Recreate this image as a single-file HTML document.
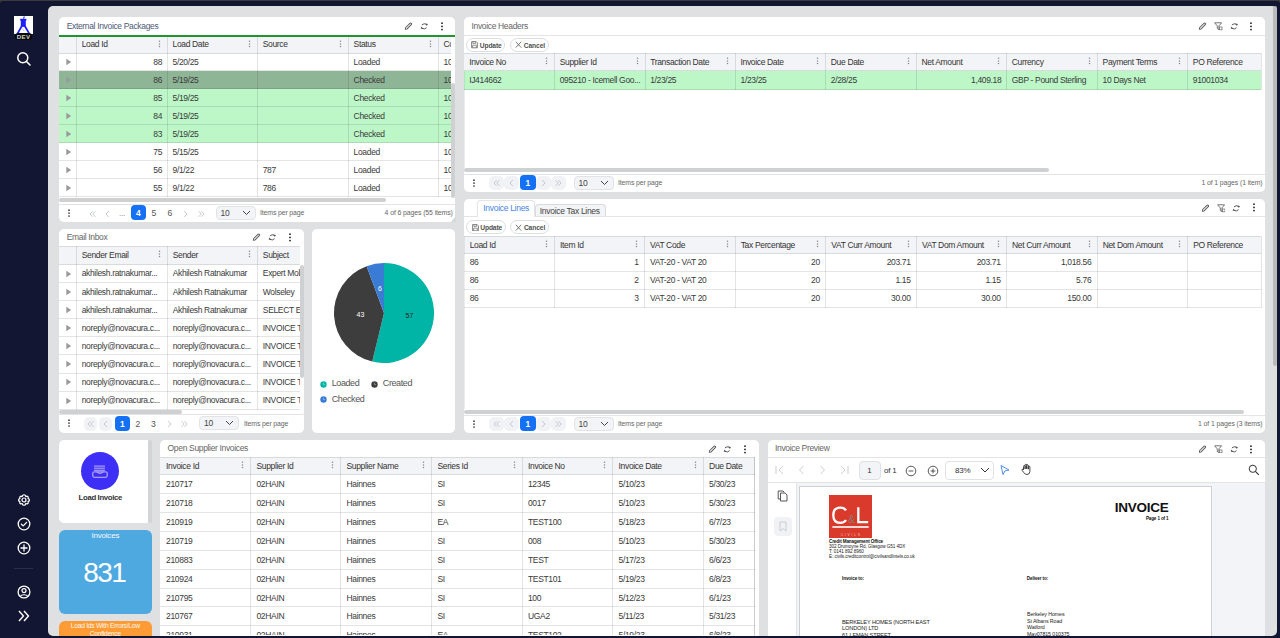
<!DOCTYPE html><html><head><meta charset="utf-8"><style>html,body{margin:0;padding:0;} body{width:1280px;height:638px;overflow:hidden;position:relative;background:#131633;font-family:"Liberation Sans", sans-serif;} div,svg{box-sizing:border-box;}</style></head><body><div style="position:absolute;left:0px;top:0px;width:1280px;height:1px;background:#3b3b3b;"></div><div style="position:absolute;left:0px;top:0px;width:3px;height:3px;background:#3b3b3b;"></div><div style="position:absolute;left:1277px;top:0px;width:3px;height:3px;background:#3b3b3b;"></div><div style="position:absolute;left:0px;top:1px;width:1280px;height:637px;background:#131633;border-radius:3px 3px 0 0;"></div><div style="position:absolute;left:47.5px;top:6px;width:1229.3px;height:630px;background:#dfe0e2;border-radius:5px;"></div><div style="position:absolute;left:14px;top:16px;width:19px;height:18px;background:#fff;"></div><svg style="position:absolute;left:14px;top:16px;" width="19" height="18" viewBox="0 0 19 18"><g fill="#1f1fff"><rect x="6.8" y="3.2" width="5" height="7.6"/><rect x="6.2" y="2.8" width="6.2" height="1.8"/><path d="M9.6 0.4 L10.9 0.6 L10.1 2.8 L9.1 2.8 Z"/><path d="M7.2 9.2 L9 9.8 L4.6 17.6 L2.6 17.6 Z"/><path d="M11.4 9.2 L9.6 9.8 L14.2 17.6 L16.2 17.6 Z"/></g><path d="M8.2 12.5 L10.2 15" stroke="#8f8fff" stroke-width="0.6"/></svg><div style="position:absolute;left:14.6px;top:33.2px;width:17.8px;height:7.2px;background:#080808;border-radius:3.2px;"></div><div style="position:absolute;left:-76.4px;width:200px;top:33.2px;font-size:6.2px;line-height:7.44px;color:#d2d2d2;font-weight:700;letter-spacing:0.25px;white-space:nowrap;text-align:center;">DEV</div><svg style="position:absolute;left:16px;top:51px;" width="16" height="16" viewBox="0 0 16 16"><circle cx="6.8" cy="6.8" r="5" fill="none" stroke="#fff" stroke-width="1.5"/><path d="M10.5 10.5 L14 14" stroke="#fff" stroke-width="1.6" stroke-linecap="round"/></svg><svg style="position:absolute;left:16px;top:492px;" width="16" height="16" viewBox="0 0 16 16"><path d="M8 1.8 L9.3 2.2 L9.8 3.6 L11.2 3.1 L12.3 4.1 L12 5.5 L13.3 6.3 L13.3 7.9 L12 8.6 L12.3 10 L11.2 11 L9.8 10.5 L9.3 11.9 L8 12.3 L6.7 11.9 L6.2 10.5 L4.8 11 L3.7 10 L4 8.6 L2.7 7.9 L2.7 6.3 L4 5.5 L3.7 4.1 L4.8 3.1 L6.2 3.6 L6.7 2.2 Z" transform="translate(0,1)" fill="none" stroke="#fff" stroke-width="1.2" stroke-linejoin="round"/><circle cx="8" cy="8" r="2" fill="none" stroke="#fff" stroke-width="1.2"/></svg><svg style="position:absolute;left:16px;top:516px;" width="16" height="16" viewBox="0 0 16 16"><circle cx="8" cy="8" r="5.8" fill="none" stroke="#fff" stroke-width="1.3"/><path d="M5.4 8.2 L7.2 9.9 L10.6 6.4" fill="none" stroke="#fff" stroke-width="1.3" stroke-linecap="round" stroke-linejoin="round"/></svg><svg style="position:absolute;left:16px;top:539.5px;" width="16" height="16" viewBox="0 0 16 16"><circle cx="8" cy="8" r="5.8" fill="none" stroke="#fff" stroke-width="1.3"/><path d="M8 5 V11 M5 8 H11" stroke="#fff" stroke-width="1.3" stroke-linecap="round"/></svg><div style="position:absolute;left:14px;top:567.5px;width:19px;height:1px;background:#2c2e48;"></div><svg style="position:absolute;left:16px;top:583.7px;" width="16" height="16" viewBox="0 0 16 16"><circle cx="8" cy="8" r="5.9" fill="none" stroke="#fff" stroke-width="1.3"/><circle cx="8" cy="6.6" r="2" fill="none" stroke="#fff" stroke-width="1.2"/><path d="M4.4 12.3 C5.2 10.2 10.8 10.2 11.6 12.3" fill="none" stroke="#fff" stroke-width="1.2"/></svg><svg style="position:absolute;left:16px;top:608px;" width="16" height="16" viewBox="0 0 16 16"><path d="M3 3 L7.5 8 L3 13 M8 3 L12.5 8 L8 13" fill="none" stroke="#fff" stroke-width="1.4" stroke-linejoin="miter"/></svg><div style="position:absolute;left:1273px;top:6px;width:4px;height:360px;background:#babbbc;border-radius:2px;"></div><div style="position:absolute;left:59px;top:17px;width:396.3px;height:204.7px;background:#fff;border-radius:5px;"></div><div style="position:absolute;left:66.7px;top:20.75px;font-size:8.5px;line-height:10.20px;color:#4e5a78;font-weight:400;letter-spacing:-0.34px;white-space:nowrap;">External Invoice Packages</div><svg style="position:absolute;left:404px;top:22px;" width="8.5" height="8.5" viewBox="0 0 8.5 8.5"><path d="M1.4 7.3 L1.7 5.5 L5.9 1.3 Q6.6 0.6 7.3 1.3 Q8 2 7.3 2.7 L3.1 6.9 Z" fill="none" stroke="#5f5f5f" stroke-width="1.05" stroke-linejoin="round"/></svg><svg style="position:absolute;left:419.5px;top:22px;" width="8.5" height="8.5" viewBox="0 0 8.5 8.5"><path d="M1.9 2.9 Q4 0.9 6.5 2.3" fill="none" stroke="#5a5a5a" stroke-width="1"/><path d="M5.5 1.6 L7.9 1.9 L6.9 3.9 Z" fill="#4a4a4a"/><path d="M6.6 5.7 Q4.4 8.0 1.9 6.2" fill="none" stroke="#5a5a5a" stroke-width="1"/><path d="M3.0 7.0 L0.6 6.6 L1.6 4.6 Z" fill="#4a4a4a"/></svg><svg style="position:absolute;left:439.5px;top:22.0px;" width="4" height="9" viewBox="0 0 4 9"><g fill="#222"><circle cx="2" cy="1.2" r="0.9"/><circle cx="2" cy="4.4" r="0.9"/><circle cx="2" cy="7.6000000000000005" r="0.9"/></g></svg><div style="position:absolute;left:59px;top:35px;width:396.3px;height:2px;background:#23942a;"></div><div style="position:absolute;left:59px;top:37px;width:392px;height:161px;overflow:hidden;"><div style="position:absolute;left:0px;top:16.1px;width:592px;height:18.04px;background:#fff;border-bottom:1px solid rgba(0,0,0,0.105);"></div><div style="position:absolute;left:0px;top:34.14px;width:592px;height:18.04px;background:#8fb597;border-bottom:1px solid rgba(0,0,0,0.105);"></div><div style="position:absolute;left:0px;top:52.18px;width:592px;height:18.04px;background:#bdf7c8;border-bottom:1px solid rgba(0,0,0,0.105);"></div><div style="position:absolute;left:0px;top:70.22px;width:592px;height:18.04px;background:#bdf7c8;border-bottom:1px solid rgba(0,0,0,0.105);"></div><div style="position:absolute;left:0px;top:88.25999999999999px;width:592px;height:18.04px;background:#bdf7c8;border-bottom:1px solid rgba(0,0,0,0.105);"></div><div style="position:absolute;left:0px;top:106.29999999999998px;width:592px;height:18.04px;background:#fff;border-bottom:1px solid rgba(0,0,0,0.105);"></div><div style="position:absolute;left:0px;top:124.34px;width:592px;height:18.04px;background:#fff;border-bottom:1px solid rgba(0,0,0,0.105);"></div><div style="position:absolute;left:0px;top:142.38px;width:592px;height:18.04px;background:#fff;border-bottom:1px solid rgba(0,0,0,0.105);"></div><div style="position:absolute;left:0px;top:0px;width:592px;height:16.9px;background:#f3f4f7;border-bottom:1px solid rgba(0,0,0,0.105);"></div><div style="position:absolute;left:17.0px;top:0px;width:1px;height:160.42px;background:rgba(0,0,0,0.105);"></div><div style="position:absolute;left:107.80000000000001px;top:0px;width:1px;height:160.42px;background:rgba(0,0,0,0.105);"></div><div style="position:absolute;left:198.0px;top:0px;width:1px;height:160.42px;background:rgba(0,0,0,0.105);"></div><div style="position:absolute;left:288.9px;top:0px;width:1px;height:160.42px;background:rgba(0,0,0,0.105);"></div><div style="position:absolute;left:378.8px;top:0px;width:1px;height:160.42px;background:rgba(0,0,0,0.105);"></div><div style="position:absolute;left:468.5px;top:0px;width:1px;height:160.42px;background:rgba(0,0,0,0.105);"></div><div style="position:absolute;left:22.7px;top:1.95px;font-size:8.5px;line-height:10.20px;color:#333;font-weight:400;letter-spacing:-0.34px;white-space:nowrap;">Load Id</div><svg style="position:absolute;left:98.80000000000001px;top:3.4499999999999993px;" width="3" height="8" viewBox="0 0 3 8"><g fill="#8a8a8a"><circle cx="1.5" cy="1.2" r="0.75"/><circle cx="1.5" cy="3.9" r="0.75"/><circle cx="1.5" cy="6.6" r="0.75"/></g></svg><div style="position:absolute;left:113.50000000000001px;top:1.95px;font-size:8.5px;line-height:10.20px;color:#333;font-weight:400;letter-spacing:-0.34px;white-space:nowrap;">Load Date</div><svg style="position:absolute;left:189.0px;top:3.4499999999999993px;" width="3" height="8" viewBox="0 0 3 8"><g fill="#8a8a8a"><circle cx="1.5" cy="1.2" r="0.75"/><circle cx="1.5" cy="3.9" r="0.75"/><circle cx="1.5" cy="6.6" r="0.75"/></g></svg><div style="position:absolute;left:203.7px;top:1.95px;font-size:8.5px;line-height:10.20px;color:#333;font-weight:400;letter-spacing:-0.34px;white-space:nowrap;">Source</div><svg style="position:absolute;left:279.9px;top:3.4499999999999993px;" width="3" height="8" viewBox="0 0 3 8"><g fill="#8a8a8a"><circle cx="1.5" cy="1.2" r="0.75"/><circle cx="1.5" cy="3.9" r="0.75"/><circle cx="1.5" cy="6.6" r="0.75"/></g></svg><div style="position:absolute;left:294.59999999999997px;top:1.95px;font-size:8.5px;line-height:10.20px;color:#333;font-weight:400;letter-spacing:-0.34px;white-space:nowrap;">Status</div><svg style="position:absolute;left:369.8px;top:3.4499999999999993px;" width="3" height="8" viewBox="0 0 3 8"><g fill="#8a8a8a"><circle cx="1.5" cy="1.2" r="0.75"/><circle cx="1.5" cy="3.9" r="0.75"/><circle cx="1.5" cy="6.6" r="0.75"/></g></svg><div style="position:absolute;left:384.5px;top:1.95px;font-size:8.5px;line-height:10.20px;color:#333;font-weight:400;letter-spacing:-0.34px;white-space:nowrap;">Company</div><svg style="position:absolute;left:459.5px;top:3.4499999999999993px;" width="3" height="8" viewBox="0 0 3 8"><g fill="#8a8a8a"><circle cx="1.5" cy="1.2" r="0.75"/><circle cx="1.5" cy="3.9" r="0.75"/><circle cx="1.5" cy="6.6" r="0.75"/></g></svg><svg style="position:absolute;left:6.05px;top:20.92px;" width="7" height="8" viewBox="0 0 7 8"><path d="M1.3 0.8 L6.2 4 L1.3 7.2 Z" fill="#9a9a9a"/></svg><div style="position:absolute;left:-196.89999999999998px;width:300px;text-align:right;top:19.75px;font-size:8.5px;line-height:10.20px;color:#3a3a3a;font-weight:400;letter-spacing:-0.34px;white-space:nowrap;">88</div><div style="position:absolute;left:113.50000000000001px;top:19.75px;font-size:8.5px;line-height:10.20px;color:#3a3a3a;font-weight:400;letter-spacing:-0.34px;white-space:nowrap;">5/20/25</div><div style="position:absolute;left:294.59999999999997px;top:19.75px;font-size:8.5px;line-height:10.20px;color:#3a3a3a;font-weight:400;letter-spacing:-0.34px;white-space:nowrap;">Loaded</div><div style="position:absolute;left:384.5px;top:19.75px;font-size:8.5px;line-height:10.20px;color:#3a3a3a;font-weight:400;letter-spacing:-0.34px;white-space:nowrap;">10</div><svg style="position:absolute;left:6.05px;top:38.959999999999994px;" width="7" height="8" viewBox="0 0 7 8"><path d="M1.3 0.8 L6.2 4 L1.3 7.2 Z" fill="#9a9a9a"/></svg><div style="position:absolute;left:-196.89999999999998px;width:300px;text-align:right;top:37.79px;font-size:8.5px;line-height:10.20px;color:#3a3a3a;font-weight:400;letter-spacing:-0.34px;white-space:nowrap;">86</div><div style="position:absolute;left:113.50000000000001px;top:37.79px;font-size:8.5px;line-height:10.20px;color:#3a3a3a;font-weight:400;letter-spacing:-0.34px;white-space:nowrap;">5/19/25</div><div style="position:absolute;left:294.59999999999997px;top:37.79px;font-size:8.5px;line-height:10.20px;color:#3a3a3a;font-weight:400;letter-spacing:-0.34px;white-space:nowrap;">Checked</div><div style="position:absolute;left:384.5px;top:37.79px;font-size:8.5px;line-height:10.20px;color:#3a3a3a;font-weight:400;letter-spacing:-0.34px;white-space:nowrap;">10</div><svg style="position:absolute;left:6.05px;top:57.0px;" width="7" height="8" viewBox="0 0 7 8"><path d="M1.3 0.8 L6.2 4 L1.3 7.2 Z" fill="#9a9a9a"/></svg><div style="position:absolute;left:-196.89999999999998px;width:300px;text-align:right;top:55.83px;font-size:8.5px;line-height:10.20px;color:#3a3a3a;font-weight:400;letter-spacing:-0.34px;white-space:nowrap;">85</div><div style="position:absolute;left:113.50000000000001px;top:55.83px;font-size:8.5px;line-height:10.20px;color:#3a3a3a;font-weight:400;letter-spacing:-0.34px;white-space:nowrap;">5/19/25</div><div style="position:absolute;left:294.59999999999997px;top:55.83px;font-size:8.5px;line-height:10.20px;color:#3a3a3a;font-weight:400;letter-spacing:-0.34px;white-space:nowrap;">Checked</div><div style="position:absolute;left:384.5px;top:55.83px;font-size:8.5px;line-height:10.20px;color:#3a3a3a;font-weight:400;letter-spacing:-0.34px;white-space:nowrap;">10</div><svg style="position:absolute;left:6.05px;top:75.03999999999999px;" width="7" height="8" viewBox="0 0 7 8"><path d="M1.3 0.8 L6.2 4 L1.3 7.2 Z" fill="#9a9a9a"/></svg><div style="position:absolute;left:-196.89999999999998px;width:300px;text-align:right;top:73.87px;font-size:8.5px;line-height:10.20px;color:#3a3a3a;font-weight:400;letter-spacing:-0.34px;white-space:nowrap;">84</div><div style="position:absolute;left:113.50000000000001px;top:73.87px;font-size:8.5px;line-height:10.20px;color:#3a3a3a;font-weight:400;letter-spacing:-0.34px;white-space:nowrap;">5/19/25</div><div style="position:absolute;left:294.59999999999997px;top:73.87px;font-size:8.5px;line-height:10.20px;color:#3a3a3a;font-weight:400;letter-spacing:-0.34px;white-space:nowrap;">Checked</div><div style="position:absolute;left:384.5px;top:73.87px;font-size:8.5px;line-height:10.20px;color:#3a3a3a;font-weight:400;letter-spacing:-0.34px;white-space:nowrap;">10</div><svg style="position:absolute;left:6.05px;top:93.07999999999998px;" width="7" height="8" viewBox="0 0 7 8"><path d="M1.3 0.8 L6.2 4 L1.3 7.2 Z" fill="#9a9a9a"/></svg><div style="position:absolute;left:-196.89999999999998px;width:300px;text-align:right;top:91.91px;font-size:8.5px;line-height:10.20px;color:#3a3a3a;font-weight:400;letter-spacing:-0.34px;white-space:nowrap;">83</div><div style="position:absolute;left:113.50000000000001px;top:91.91px;font-size:8.5px;line-height:10.20px;color:#3a3a3a;font-weight:400;letter-spacing:-0.34px;white-space:nowrap;">5/19/25</div><div style="position:absolute;left:294.59999999999997px;top:91.91px;font-size:8.5px;line-height:10.20px;color:#3a3a3a;font-weight:400;letter-spacing:-0.34px;white-space:nowrap;">Checked</div><div style="position:absolute;left:384.5px;top:91.91px;font-size:8.5px;line-height:10.20px;color:#3a3a3a;font-weight:400;letter-spacing:-0.34px;white-space:nowrap;">10</div><svg style="position:absolute;left:6.05px;top:111.11999999999998px;" width="7" height="8" viewBox="0 0 7 8"><path d="M1.3 0.8 L6.2 4 L1.3 7.2 Z" fill="#9a9a9a"/></svg><div style="position:absolute;left:-196.89999999999998px;width:300px;text-align:right;top:109.95px;font-size:8.5px;line-height:10.20px;color:#3a3a3a;font-weight:400;letter-spacing:-0.34px;white-space:nowrap;">75</div><div style="position:absolute;left:113.50000000000001px;top:109.95px;font-size:8.5px;line-height:10.20px;color:#3a3a3a;font-weight:400;letter-spacing:-0.34px;white-space:nowrap;">5/15/25</div><div style="position:absolute;left:294.59999999999997px;top:109.95px;font-size:8.5px;line-height:10.20px;color:#3a3a3a;font-weight:400;letter-spacing:-0.34px;white-space:nowrap;">Loaded</div><div style="position:absolute;left:384.5px;top:109.95px;font-size:8.5px;line-height:10.20px;color:#3a3a3a;font-weight:400;letter-spacing:-0.34px;white-space:nowrap;">10</div><svg style="position:absolute;left:6.05px;top:129.16000000000003px;" width="7" height="8" viewBox="0 0 7 8"><path d="M1.3 0.8 L6.2 4 L1.3 7.2 Z" fill="#9a9a9a"/></svg><div style="position:absolute;left:-196.89999999999998px;width:300px;text-align:right;top:127.99px;font-size:8.5px;line-height:10.20px;color:#3a3a3a;font-weight:400;letter-spacing:-0.34px;white-space:nowrap;">56</div><div style="position:absolute;left:113.50000000000001px;top:127.99px;font-size:8.5px;line-height:10.20px;color:#3a3a3a;font-weight:400;letter-spacing:-0.34px;white-space:nowrap;">9/1/22</div><div style="position:absolute;left:203.7px;top:127.99px;font-size:8.5px;line-height:10.20px;color:#3a3a3a;font-weight:400;letter-spacing:-0.34px;white-space:nowrap;">787</div><div style="position:absolute;left:294.59999999999997px;top:127.99px;font-size:8.5px;line-height:10.20px;color:#3a3a3a;font-weight:400;letter-spacing:-0.34px;white-space:nowrap;">Loaded</div><div style="position:absolute;left:384.5px;top:127.99px;font-size:8.5px;line-height:10.20px;color:#3a3a3a;font-weight:400;letter-spacing:-0.34px;white-space:nowrap;">10</div><svg style="position:absolute;left:6.05px;top:147.20000000000002px;" width="7" height="8" viewBox="0 0 7 8"><path d="M1.3 0.8 L6.2 4 L1.3 7.2 Z" fill="#9a9a9a"/></svg><div style="position:absolute;left:-196.89999999999998px;width:300px;text-align:right;top:146.03px;font-size:8.5px;line-height:10.20px;color:#3a3a3a;font-weight:400;letter-spacing:-0.34px;white-space:nowrap;">55</div><div style="position:absolute;left:113.50000000000001px;top:146.03px;font-size:8.5px;line-height:10.20px;color:#3a3a3a;font-weight:400;letter-spacing:-0.34px;white-space:nowrap;">9/1/22</div><div style="position:absolute;left:203.7px;top:146.03px;font-size:8.5px;line-height:10.20px;color:#3a3a3a;font-weight:400;letter-spacing:-0.34px;white-space:nowrap;">786</div><div style="position:absolute;left:294.59999999999997px;top:146.03px;font-size:8.5px;line-height:10.20px;color:#3a3a3a;font-weight:400;letter-spacing:-0.34px;white-space:nowrap;">Loaded</div><div style="position:absolute;left:384.5px;top:146.03px;font-size:8.5px;line-height:10.20px;color:#3a3a3a;font-weight:400;letter-spacing:-0.34px;white-space:nowrap;">10</div></div><div style="position:absolute;left:451px;top:37px;width:4px;height:161px;background:#fff;"></div><div style="position:absolute;left:451.2px;top:83.3px;width:4px;height:114.3px;background:#cfd0d2;border-radius:2px;"></div><div style="position:absolute;left:59px;top:198.2px;width:327px;height:4px;background:#cfd0d2;border-radius:2px;"></div><div style="position:absolute;left:59px;top:204.3px;width:396.3px;height:1px;background:rgba(0,0,0,0.105);"></div><svg style="position:absolute;left:67px;top:208.70000000000002px;" width="4" height="9" viewBox="0 0 4 9"><g fill="#333"><circle cx="2" cy="1.2" r="0.85"/><circle cx="2" cy="4.1" r="0.85"/><circle cx="2" cy="7.0" r="0.85"/></g></svg><svg style="position:absolute;left:88.5px;top:209.5px;" width="7" height="8" viewBox="0 0 7 8"><path d="M3.6 1.2 L1 4 L3.6 6.8 M6.4 1.2 L3.8 4 L6.4 6.8" fill="none" stroke="#b8bcc4" stroke-width="0.8"/></svg><svg style="position:absolute;left:104.5px;top:209.5px;" width="5" height="8" viewBox="0 0 5 8"><path d="M3.8 1 L1 4 L3.8 7" fill="none" stroke="#b8bcc4" stroke-width="0.8"/></svg><div style="position:absolute;left:-28.0px;width:300px;text-align:center;top:209.13px;font-size:8px;line-height:9.60px;color:#777;font-weight:400;letter-spacing:-0.3px;white-space:nowrap;">...</div><div style="position:absolute;left:130.9px;top:205.4px;width:15px;height:15px;background:#1470f5;border-radius:4px;"></div><div style="position:absolute;left:-11.599999999999994px;width:300px;text-align:center;top:208.45px;font-size:8.4px;line-height:10.08px;color:#fff;font-weight:700;letter-spacing:0px;white-space:nowrap;">4</div><div style="position:absolute;left:4.0px;width:300px;text-align:center;top:208.46px;font-size:8.6px;line-height:10.32px;color:#555;font-weight:400;letter-spacing:0px;white-space:nowrap;">5</div><div style="position:absolute;left:20.0px;width:300px;text-align:center;top:208.46px;font-size:8.6px;line-height:10.32px;color:#555;font-weight:400;letter-spacing:0px;white-space:nowrap;">6</div><svg style="position:absolute;left:182.5px;top:209.5px;" width="5" height="8" viewBox="0 0 5 8"><path d="M1.2 1 L4 4 L1.2 7" fill="none" stroke="#b8bcc4" stroke-width="0.8"/></svg><svg style="position:absolute;left:197.5px;top:209.5px;" width="7" height="8" viewBox="0 0 7 8"><path d="M0.6 1.2 L3.2 4 L0.6 6.8 M3.4 1.2 L6 4 L3.4 6.8" fill="none" stroke="#b8bcc4" stroke-width="0.8"/></svg><div style="position:absolute;left:216px;top:205.7px;width:39.5px;height:14px;background:#f3f4f7;border:1px solid #e2e3e6;border-radius:4px;"></div><div style="position:absolute;left:220.5px;top:207.75px;font-size:8.5px;line-height:10.20px;color:#444;font-weight:400;letter-spacing:-0.2px;white-space:nowrap;">10</div><svg style="position:absolute;left:242px;top:209.7px;" width="9" height="6" viewBox="0 0 9 6"><path d="M1 1 L4.5 4.5 L8 1" fill="none" stroke="#444" stroke-width="1"/></svg><div style="position:absolute;left:260px;top:209.47px;font-size:6.9px;line-height:8.28px;color:#666;font-weight:400;letter-spacing:-0.13px;white-space:nowrap;">Items per page</div><div style="position:absolute;left:152.8px;width:300px;text-align:right;top:209.47px;font-size:6.9px;line-height:8.28px;color:#666;font-weight:400;letter-spacing:-0.1px;white-space:nowrap;">4 of 6 pages (55 items)</div><svg style="position:absolute;left:450.5px;top:215.5px;" width="5" height="6" viewBox="0 0 5 6"><path d="M5 0 L5 6 L0 6 Z" fill="#d6d7d9"/></svg><div style="position:absolute;left:464px;top:17px;width:801px;height:174.8px;background:#fff;border-radius:5px;"></div><div style="position:absolute;left:471.5px;top:20.85px;font-size:8.5px;line-height:10.20px;color:#666;font-weight:400;letter-spacing:-0.34px;white-space:nowrap;">Invoice Headers</div><svg style="position:absolute;left:1198px;top:22px;" width="8.5" height="8.5" viewBox="0 0 8.5 8.5"><path d="M1.4 7.3 L1.7 5.5 L5.9 1.3 Q6.6 0.6 7.3 1.3 Q8 2 7.3 2.7 L3.1 6.9 Z" fill="none" stroke="#5f5f5f" stroke-width="1.05" stroke-linejoin="round"/></svg><svg style="position:absolute;left:1214px;top:22px;" width="8.5" height="8.5" viewBox="0 0 8.5 8.5"><path d="M0.6 0.8 H7.6 L4.9 3.9 V7.6 L3.3 6.6 V3.9 Z" fill="none" stroke="#666" stroke-width="0.9" stroke-linejoin="round"/><rect x="5.4" y="5" width="2.6" height="2.8" fill="#fff" stroke="#666" stroke-width="0.7"/></svg><svg style="position:absolute;left:1229.5px;top:22px;" width="8.5" height="8.5" viewBox="0 0 8.5 8.5"><path d="M1.9 2.9 Q4 0.9 6.5 2.3" fill="none" stroke="#5a5a5a" stroke-width="1"/><path d="M5.5 1.6 L7.9 1.9 L6.9 3.9 Z" fill="#4a4a4a"/><path d="M6.6 5.7 Q4.4 8.0 1.9 6.2" fill="none" stroke="#5a5a5a" stroke-width="1"/><path d="M3.0 7.0 L0.6 6.6 L1.6 4.6 Z" fill="#4a4a4a"/></svg><svg style="position:absolute;left:1249.3px;top:22.0px;" width="4" height="9" viewBox="0 0 4 9"><g fill="#222"><circle cx="2" cy="1.2" r="0.9"/><circle cx="2" cy="4.4" r="0.9"/><circle cx="2" cy="7.6000000000000005" r="0.9"/></g></svg><div style="position:absolute;left:464px;top:34.8px;width:801px;height:1px;background:rgba(0,0,0,0.105);"></div><div style="position:absolute;left:465.8px;top:38.2px;width:39.7px;height:13.8px;background:#fff;border:1px solid #dcdde0;border-radius:7px;"></div><svg style="position:absolute;left:471.0px;top:41.400000000000006px;" width="7" height="7.5" viewBox="0 0 7 7.5"><path d="M0.6 0.6 H5.2 L6.4 1.8 V6.8 H0.6 Z" fill="none" stroke="#666" stroke-width="0.8" stroke-linejoin="round"/><path d="M1.9 0.6 V2.4 H4.6 V0.6" fill="none" stroke="#666" stroke-width="0.7"/><path d="M1.7 6.8 V4.2 H5.3 V6.8" fill="none" stroke="#666" stroke-width="0.7"/></svg><div style="position:absolute;left:479.8px;top:41.66px;font-size:6.7px;line-height:8.04px;color:#505050;font-weight:700;letter-spacing:-0.15px;white-space:nowrap;">Update</div><div style="position:absolute;left:510.1px;top:38.2px;width:39px;height:13.8px;background:#fff;border:1px solid #dcdde0;border-radius:7px;"></div><svg style="position:absolute;left:515.1px;top:41.400000000000006px;" width="7" height="7.5" viewBox="0 0 7 7.5"><path d="M0.8 0.8 L6.2 6.6 M6.2 0.8 L0.8 6.6" stroke="#555" stroke-width="0.8"/></svg><div style="position:absolute;left:523.7px;top:41.66px;font-size:6.7px;line-height:8.04px;color:#505050;font-weight:700;letter-spacing:-0.1px;white-space:nowrap;">Cancel</div><div style="position:absolute;left:464px;top:53.1px;width:797px;height:114.9px;overflow:hidden;"><div style="position:absolute;left:0px;top:17.999999999999993px;width:997px;height:18.9px;background:#bdf7c8;border-bottom:1px solid rgba(0,0,0,0.105);"></div><div style="position:absolute;left:0px;top:0px;width:997px;height:17.999999999999993px;background:#f3f4f7;border-top:1px solid rgba(0,0,0,0.105);border-bottom:1px solid rgba(0,0,0,0.105);"></div><div style="position:absolute;left:90.0px;top:0px;width:1px;height:36.89999999999999px;background:rgba(0,0,0,0.105);"></div><div style="position:absolute;left:180.5px;top:0px;width:1px;height:36.89999999999999px;background:rgba(0,0,0,0.105);"></div><div style="position:absolute;left:270.79999999999995px;top:0px;width:1px;height:36.89999999999999px;background:rgba(0,0,0,0.105);"></div><div style="position:absolute;left:361.1px;top:0px;width:1px;height:36.89999999999999px;background:rgba(0,0,0,0.105);"></div><div style="position:absolute;left:451.79999999999995px;top:0px;width:1px;height:36.89999999999999px;background:rgba(0,0,0,0.105);"></div><div style="position:absolute;left:542.1px;top:0px;width:1px;height:36.89999999999999px;background:rgba(0,0,0,0.105);"></div><div style="position:absolute;left:632.9000000000001px;top:0px;width:1px;height:36.89999999999999px;background:rgba(0,0,0,0.105);"></div><div style="position:absolute;left:723.0999999999999px;top:0px;width:1px;height:36.89999999999999px;background:rgba(0,0,0,0.105);"></div><div style="position:absolute;left:796.5px;top:0px;width:1px;height:36.89999999999999px;background:rgba(0,0,0,0.105);"></div><div style="position:absolute;left:5.2px;top:3.95px;font-size:8.5px;line-height:10.20px;color:#333;font-weight:400;letter-spacing:-0.34px;white-space:nowrap;">Invoice No</div><svg style="position:absolute;left:81.0px;top:3.9999999999999964px;" width="3" height="8" viewBox="0 0 3 8"><g fill="#8a8a8a"><circle cx="1.5" cy="1.2" r="0.75"/><circle cx="1.5" cy="3.9" r="0.75"/><circle cx="1.5" cy="6.6" r="0.75"/></g></svg><div style="position:absolute;left:95.7px;top:3.95px;font-size:8.5px;line-height:10.20px;color:#333;font-weight:400;letter-spacing:-0.34px;white-space:nowrap;">Supplier Id</div><svg style="position:absolute;left:171.5px;top:3.9999999999999964px;" width="3" height="8" viewBox="0 0 3 8"><g fill="#8a8a8a"><circle cx="1.5" cy="1.2" r="0.75"/><circle cx="1.5" cy="3.9" r="0.75"/><circle cx="1.5" cy="6.6" r="0.75"/></g></svg><div style="position:absolute;left:186.2px;top:3.95px;font-size:8.5px;line-height:10.20px;color:#333;font-weight:400;letter-spacing:-0.34px;white-space:nowrap;">Transaction Date</div><svg style="position:absolute;left:261.79999999999995px;top:3.9999999999999964px;" width="3" height="8" viewBox="0 0 3 8"><g fill="#8a8a8a"><circle cx="1.5" cy="1.2" r="0.75"/><circle cx="1.5" cy="3.9" r="0.75"/><circle cx="1.5" cy="6.6" r="0.75"/></g></svg><div style="position:absolute;left:276.49999999999994px;top:3.95px;font-size:8.5px;line-height:10.20px;color:#333;font-weight:400;letter-spacing:-0.34px;white-space:nowrap;">Invoice Date</div><svg style="position:absolute;left:352.1px;top:3.9999999999999964px;" width="3" height="8" viewBox="0 0 3 8"><g fill="#8a8a8a"><circle cx="1.5" cy="1.2" r="0.75"/><circle cx="1.5" cy="3.9" r="0.75"/><circle cx="1.5" cy="6.6" r="0.75"/></g></svg><div style="position:absolute;left:366.8px;top:3.95px;font-size:8.5px;line-height:10.20px;color:#333;font-weight:400;letter-spacing:-0.34px;white-space:nowrap;">Due Date</div><svg style="position:absolute;left:442.79999999999995px;top:3.9999999999999964px;" width="3" height="8" viewBox="0 0 3 8"><g fill="#8a8a8a"><circle cx="1.5" cy="1.2" r="0.75"/><circle cx="1.5" cy="3.9" r="0.75"/><circle cx="1.5" cy="6.6" r="0.75"/></g></svg><div style="position:absolute;left:457.49999999999994px;top:3.95px;font-size:8.5px;line-height:10.20px;color:#333;font-weight:400;letter-spacing:-0.34px;white-space:nowrap;">Net Amount</div><svg style="position:absolute;left:533.1px;top:3.9999999999999964px;" width="3" height="8" viewBox="0 0 3 8"><g fill="#8a8a8a"><circle cx="1.5" cy="1.2" r="0.75"/><circle cx="1.5" cy="3.9" r="0.75"/><circle cx="1.5" cy="6.6" r="0.75"/></g></svg><div style="position:absolute;left:547.8000000000001px;top:3.95px;font-size:8.5px;line-height:10.20px;color:#333;font-weight:400;letter-spacing:-0.34px;white-space:nowrap;">Currency</div><svg style="position:absolute;left:623.9000000000001px;top:3.9999999999999964px;" width="3" height="8" viewBox="0 0 3 8"><g fill="#8a8a8a"><circle cx="1.5" cy="1.2" r="0.75"/><circle cx="1.5" cy="3.9" r="0.75"/><circle cx="1.5" cy="6.6" r="0.75"/></g></svg><div style="position:absolute;left:638.6000000000001px;top:3.95px;font-size:8.5px;line-height:10.20px;color:#333;font-weight:400;letter-spacing:-0.34px;white-space:nowrap;">Payment Terms</div><svg style="position:absolute;left:714.0999999999999px;top:3.9999999999999964px;" width="3" height="8" viewBox="0 0 3 8"><g fill="#8a8a8a"><circle cx="1.5" cy="1.2" r="0.75"/><circle cx="1.5" cy="3.9" r="0.75"/><circle cx="1.5" cy="6.6" r="0.75"/></g></svg><div style="position:absolute;left:728.8px;top:3.95px;font-size:8.5px;line-height:10.20px;color:#333;font-weight:400;letter-spacing:-0.34px;white-space:nowrap;">PO Reference</div><div style="position:absolute;left:5.2px;top:21.85px;font-size:8.5px;line-height:10.20px;color:#3a3a3a;font-weight:400;letter-spacing:-0.34px;white-space:nowrap;">IJ414662</div><div style="position:absolute;left:95.7px;top:21.85px;font-size:8.5px;line-height:10.20px;color:#3a3a3a;font-weight:400;letter-spacing:-0.34px;white-space:nowrap;">095210 - Icemell Goo...</div><div style="position:absolute;left:186.2px;top:21.85px;font-size:8.5px;line-height:10.20px;color:#3a3a3a;font-weight:400;letter-spacing:-0.34px;white-space:nowrap;">1/23/25</div><div style="position:absolute;left:276.49999999999994px;top:21.85px;font-size:8.5px;line-height:10.20px;color:#3a3a3a;font-weight:400;letter-spacing:-0.34px;white-space:nowrap;">1/23/25</div><div style="position:absolute;left:366.8px;top:21.85px;font-size:8.5px;line-height:10.20px;color:#3a3a3a;font-weight:400;letter-spacing:-0.34px;white-space:nowrap;">2/28/25</div><div style="position:absolute;left:237.39999999999998px;width:300px;text-align:right;top:21.85px;font-size:8.5px;line-height:10.20px;color:#3a3a3a;font-weight:400;letter-spacing:-0.34px;white-space:nowrap;">1,409.18</div><div style="position:absolute;left:547.8000000000001px;top:21.85px;font-size:8.5px;line-height:10.20px;color:#3a3a3a;font-weight:400;letter-spacing:-0.34px;white-space:nowrap;">GBP - Pound Sterling</div><div style="position:absolute;left:638.6000000000001px;top:21.85px;font-size:8.5px;line-height:10.20px;color:#3a3a3a;font-weight:400;letter-spacing:-0.34px;white-space:nowrap;">10 Days Net</div><div style="position:absolute;left:728.8px;top:21.85px;font-size:8.5px;line-height:10.20px;color:#3a3a3a;font-weight:400;letter-spacing:-0.34px;white-space:nowrap;">91001034</div></div><div style="position:absolute;left:1260.5px;top:53.1px;width:1px;height:37px;background:rgba(0,0,0,0.105);"></div><div style="position:absolute;left:464px;top:71px;width:1px;height:97px;background:rgba(0,0,0,0.07);"></div><div style="position:absolute;left:464px;top:168.3px;width:585px;height:4px;background:#cfd0d2;border-radius:2px;"></div><div style="position:absolute;left:464px;top:173.8px;width:801px;height:1px;background:rgba(0,0,0,0.105);"></div><svg style="position:absolute;left:472px;top:178.50000000000003px;" width="4" height="9" viewBox="0 0 4 9"><g fill="#333"><circle cx="2" cy="1.2" r="0.85"/><circle cx="2" cy="4.1" r="0.85"/><circle cx="2" cy="7.0" r="0.85"/></g></svg><div style="position:absolute;left:488.8px;top:176.10000000000002px;width:15px;height:14.4px;background:#f1f2f5;border-radius:5px;"></div><svg style="position:absolute;left:492.8px;top:179.3px;" width="7" height="8" viewBox="0 0 7 8"><path d="M3.6 1.2 L1 4 L3.6 6.8 M6.4 1.2 L3.8 4 L6.4 6.8" fill="none" stroke="#b8bcc4" stroke-width="0.8"/></svg><div style="position:absolute;left:504px;top:176.10000000000002px;width:15px;height:14.4px;background:#f1f2f5;border-radius:5px;"></div><svg style="position:absolute;left:509.0px;top:179.3px;" width="5" height="8" viewBox="0 0 5 8"><path d="M3.8 1 L1 4 L3.8 7" fill="none" stroke="#b8bcc4" stroke-width="0.8"/></svg><div style="position:absolute;left:520px;top:175.20000000000002px;width:15.6px;height:15px;background:#1470f5;border-radius:4px;"></div><div style="position:absolute;left:377.79999999999995px;width:300px;text-align:center;top:178.25px;font-size:8.4px;line-height:10.08px;color:#fff;font-weight:700;letter-spacing:0px;white-space:nowrap;">1</div><div style="position:absolute;left:536px;top:176.10000000000002px;width:15px;height:14.4px;background:#f1f2f5;border-radius:5px;"></div><svg style="position:absolute;left:541.0px;top:179.3px;" width="5" height="8" viewBox="0 0 5 8"><path d="M1.2 1 L4 4 L1.2 7" fill="none" stroke="#b8bcc4" stroke-width="0.8"/></svg><div style="position:absolute;left:551px;top:176.10000000000002px;width:15px;height:14.4px;background:#f1f2f5;border-radius:5px;"></div><svg style="position:absolute;left:555.0px;top:179.3px;" width="7" height="8" viewBox="0 0 7 8"><path d="M0.6 1.2 L3.2 4 L0.6 6.8 M3.4 1.2 L6 4 L3.4 6.8" fill="none" stroke="#b8bcc4" stroke-width="0.8"/></svg><div style="position:absolute;left:574px;top:175.5px;width:39.5px;height:14px;background:#f3f4f7;border:1px solid #e2e3e6;border-radius:4px;"></div><div style="position:absolute;left:578.5px;top:177.55px;font-size:8.5px;line-height:10.20px;color:#444;font-weight:400;letter-spacing:-0.2px;white-space:nowrap;">10</div><svg style="position:absolute;left:600px;top:179.5px;" width="9" height="6" viewBox="0 0 9 6"><path d="M1 1 L4.5 4.5 L8 1" fill="none" stroke="#444" stroke-width="1"/></svg><div style="position:absolute;left:618px;top:179.27px;font-size:6.9px;line-height:8.28px;color:#666;font-weight:400;letter-spacing:-0.13px;white-space:nowrap;">Items per page</div><div style="position:absolute;left:962.5px;width:300px;text-align:right;top:179.27px;font-size:6.9px;line-height:8.28px;color:#666;font-weight:400;letter-spacing:-0.1px;white-space:nowrap;">1 of 1 pages (1 item)</div><div style="position:absolute;left:59px;top:228.6px;width:245px;height:204px;background:#fff;border-radius:5px;"></div><div style="position:absolute;left:66.7px;top:231.95px;font-size:8.5px;line-height:10.20px;color:#666;font-weight:400;letter-spacing:-0.34px;white-space:nowrap;">Email Inbox</div><svg style="position:absolute;left:252px;top:233px;" width="8.5" height="8.5" viewBox="0 0 8.5 8.5"><path d="M1.4 7.3 L1.7 5.5 L5.9 1.3 Q6.6 0.6 7.3 1.3 Q8 2 7.3 2.7 L3.1 6.9 Z" fill="none" stroke="#5f5f5f" stroke-width="1.05" stroke-linejoin="round"/></svg><svg style="position:absolute;left:268px;top:233px;" width="8.5" height="8.5" viewBox="0 0 8.5 8.5"><path d="M1.9 2.9 Q4 0.9 6.5 2.3" fill="none" stroke="#5a5a5a" stroke-width="1"/><path d="M5.5 1.6 L7.9 1.9 L6.9 3.9 Z" fill="#4a4a4a"/><path d="M6.6 5.7 Q4.4 8.0 1.9 6.2" fill="none" stroke="#5a5a5a" stroke-width="1"/><path d="M3.0 7.0 L0.6 6.6 L1.6 4.6 Z" fill="#4a4a4a"/></svg><svg style="position:absolute;left:288px;top:233.4px;" width="4" height="9" viewBox="0 0 4 9"><g fill="#222"><circle cx="2" cy="1.2" r="0.9"/><circle cx="2" cy="4.4" r="0.9"/><circle cx="2" cy="7.6000000000000005" r="0.9"/></g></svg><div style="position:absolute;left:59px;top:246.3px;width:241px;height:163.7px;overflow:hidden;"><div style="position:absolute;left:0px;top:18.399999999999977px;width:441px;height:18.15px;background:#fff;border-bottom:1px solid rgba(0,0,0,0.105);"></div><div style="position:absolute;left:0px;top:36.549999999999976px;width:441px;height:18.15px;background:#fff;border-bottom:1px solid rgba(0,0,0,0.105);"></div><div style="position:absolute;left:0px;top:54.699999999999974px;width:441px;height:18.15px;background:#fff;border-bottom:1px solid rgba(0,0,0,0.105);"></div><div style="position:absolute;left:0px;top:72.84999999999997px;width:441px;height:18.15px;background:#fff;border-bottom:1px solid rgba(0,0,0,0.105);"></div><div style="position:absolute;left:0px;top:90.99999999999997px;width:441px;height:18.15px;background:#fff;border-bottom:1px solid rgba(0,0,0,0.105);"></div><div style="position:absolute;left:0px;top:109.14999999999998px;width:441px;height:18.15px;background:#fff;border-bottom:1px solid rgba(0,0,0,0.105);"></div><div style="position:absolute;left:0px;top:127.29999999999997px;width:441px;height:18.15px;background:#fff;border-bottom:1px solid rgba(0,0,0,0.105);"></div><div style="position:absolute;left:0px;top:145.44999999999996px;width:441px;height:18.15px;background:#fff;border-bottom:1px solid rgba(0,0,0,0.105);"></div><div style="position:absolute;left:0px;top:0px;width:441px;height:18.399999999999977px;background:#f3f4f7;border-top:1px solid rgba(0,0,0,0.105);border-bottom:1px solid rgba(0,0,0,0.105);"></div><div style="position:absolute;left:17.0px;top:0px;width:1px;height:163.59999999999997px;background:rgba(0,0,0,0.105);"></div><div style="position:absolute;left:108.0px;top:0px;width:1px;height:163.59999999999997px;background:rgba(0,0,0,0.105);"></div><div style="position:absolute;left:198.10000000000002px;top:0px;width:1px;height:163.59999999999997px;background:rgba(0,0,0,0.105);"></div><div style="position:absolute;left:288.5px;top:0px;width:1px;height:163.59999999999997px;background:rgba(0,0,0,0.105);"></div><div style="position:absolute;left:22.7px;top:3.95px;font-size:8.5px;line-height:10.20px;color:#333;font-weight:400;letter-spacing:-0.34px;white-space:nowrap;">Sender Email</div><svg style="position:absolute;left:99.0px;top:4.199999999999989px;" width="3" height="8" viewBox="0 0 3 8"><g fill="#8a8a8a"><circle cx="1.5" cy="1.2" r="0.75"/><circle cx="1.5" cy="3.9" r="0.75"/><circle cx="1.5" cy="6.6" r="0.75"/></g></svg><div style="position:absolute;left:113.7px;top:3.95px;font-size:8.5px;line-height:10.20px;color:#333;font-weight:400;letter-spacing:-0.34px;white-space:nowrap;">Sender</div><svg style="position:absolute;left:189.10000000000002px;top:4.199999999999989px;" width="3" height="8" viewBox="0 0 3 8"><g fill="#8a8a8a"><circle cx="1.5" cy="1.2" r="0.75"/><circle cx="1.5" cy="3.9" r="0.75"/><circle cx="1.5" cy="6.6" r="0.75"/></g></svg><div style="position:absolute;left:203.8px;top:3.95px;font-size:8.5px;line-height:10.20px;color:#333;font-weight:400;letter-spacing:-0.34px;white-space:nowrap;">Subject</div><svg style="position:absolute;left:279.5px;top:4.199999999999989px;" width="3" height="8" viewBox="0 0 3 8"><g fill="#8a8a8a"><circle cx="1.5" cy="1.2" r="0.75"/><circle cx="1.5" cy="3.9" r="0.75"/><circle cx="1.5" cy="6.6" r="0.75"/></g></svg><svg style="position:absolute;left:6.05px;top:23.274999999999977px;" width="7" height="8" viewBox="0 0 7 8"><path d="M1.3 0.8 L6.2 4 L1.3 7.2 Z" fill="#9a9a9a"/></svg><div style="position:absolute;left:22.7px;top:22.15px;font-size:8.5px;line-height:10.20px;color:#3a3a3a;font-weight:400;letter-spacing:-0.34px;white-space:nowrap;">akhilesh.ratnakumar...</div><div style="position:absolute;left:113.7px;top:22.15px;font-size:8.5px;line-height:10.20px;color:#3a3a3a;font-weight:400;letter-spacing:-0.34px;white-space:nowrap;">Akhilesh Ratnakumar</div><div style="position:absolute;left:203.8px;top:22.15px;font-size:8.5px;line-height:10.20px;color:#3a3a3a;font-weight:400;letter-spacing:-0.34px;white-space:nowrap;">Expert Mobile</div><svg style="position:absolute;left:6.05px;top:41.42499999999997px;" width="7" height="8" viewBox="0 0 7 8"><path d="M1.3 0.8 L6.2 4 L1.3 7.2 Z" fill="#9a9a9a"/></svg><div style="position:absolute;left:22.7px;top:40.3px;font-size:8.5px;line-height:10.20px;color:#3a3a3a;font-weight:400;letter-spacing:-0.34px;white-space:nowrap;">akhilesh.ratnakumar...</div><div style="position:absolute;left:113.7px;top:40.3px;font-size:8.5px;line-height:10.20px;color:#3a3a3a;font-weight:400;letter-spacing:-0.34px;white-space:nowrap;">Akhilesh Ratnakumar</div><div style="position:absolute;left:203.8px;top:40.3px;font-size:8.5px;line-height:10.20px;color:#3a3a3a;font-weight:400;letter-spacing:-0.34px;white-space:nowrap;">Wolseley</div><svg style="position:absolute;left:6.05px;top:59.574999999999974px;" width="7" height="8" viewBox="0 0 7 8"><path d="M1.3 0.8 L6.2 4 L1.3 7.2 Z" fill="#9a9a9a"/></svg><div style="position:absolute;left:22.7px;top:58.45px;font-size:8.5px;line-height:10.20px;color:#3a3a3a;font-weight:400;letter-spacing:-0.34px;white-space:nowrap;">akhilesh.ratnakumar...</div><div style="position:absolute;left:113.7px;top:58.45px;font-size:8.5px;line-height:10.20px;color:#3a3a3a;font-weight:400;letter-spacing:-0.34px;white-space:nowrap;">Akhilesh Ratnakumar</div><div style="position:absolute;left:203.8px;top:58.45px;font-size:8.5px;line-height:10.20px;color:#3a3a3a;font-weight:400;letter-spacing:-0.34px;white-space:nowrap;">SELECT ELECTRICAL</div><svg style="position:absolute;left:6.05px;top:77.72499999999997px;" width="7" height="8" viewBox="0 0 7 8"><path d="M1.3 0.8 L6.2 4 L1.3 7.2 Z" fill="#9a9a9a"/></svg><div style="position:absolute;left:22.7px;top:76.6px;font-size:8.5px;line-height:10.20px;color:#3a3a3a;font-weight:400;letter-spacing:-0.34px;white-space:nowrap;">noreply@novacura.c...</div><div style="position:absolute;left:113.7px;top:76.6px;font-size:8.5px;line-height:10.20px;color:#3a3a3a;font-weight:400;letter-spacing:-0.34px;white-space:nowrap;">noreply@novacura.c...</div><div style="position:absolute;left:203.8px;top:76.6px;font-size:8.5px;line-height:10.20px;color:#3a3a3a;font-weight:400;letter-spacing:-0.34px;white-space:nowrap;">INVOICE TEST</div><svg style="position:absolute;left:6.05px;top:95.87499999999997px;" width="7" height="8" viewBox="0 0 7 8"><path d="M1.3 0.8 L6.2 4 L1.3 7.2 Z" fill="#9a9a9a"/></svg><div style="position:absolute;left:22.7px;top:94.75px;font-size:8.5px;line-height:10.20px;color:#3a3a3a;font-weight:400;letter-spacing:-0.34px;white-space:nowrap;">noreply@novacura.c...</div><div style="position:absolute;left:113.7px;top:94.75px;font-size:8.5px;line-height:10.20px;color:#3a3a3a;font-weight:400;letter-spacing:-0.34px;white-space:nowrap;">noreply@novacura.c...</div><div style="position:absolute;left:203.8px;top:94.75px;font-size:8.5px;line-height:10.20px;color:#3a3a3a;font-weight:400;letter-spacing:-0.34px;white-space:nowrap;">INVOICE TEST</div><svg style="position:absolute;left:6.05px;top:114.02499999999998px;" width="7" height="8" viewBox="0 0 7 8"><path d="M1.3 0.8 L6.2 4 L1.3 7.2 Z" fill="#9a9a9a"/></svg><div style="position:absolute;left:22.7px;top:112.9px;font-size:8.5px;line-height:10.20px;color:#3a3a3a;font-weight:400;letter-spacing:-0.34px;white-space:nowrap;">noreply@novacura.c...</div><div style="position:absolute;left:113.7px;top:112.9px;font-size:8.5px;line-height:10.20px;color:#3a3a3a;font-weight:400;letter-spacing:-0.34px;white-space:nowrap;">noreply@novacura.c...</div><div style="position:absolute;left:203.8px;top:112.9px;font-size:8.5px;line-height:10.20px;color:#3a3a3a;font-weight:400;letter-spacing:-0.34px;white-space:nowrap;">INVOICE TEST</div><svg style="position:absolute;left:6.05px;top:132.17499999999998px;" width="7" height="8" viewBox="0 0 7 8"><path d="M1.3 0.8 L6.2 4 L1.3 7.2 Z" fill="#9a9a9a"/></svg><div style="position:absolute;left:22.7px;top:131.05px;font-size:8.5px;line-height:10.20px;color:#3a3a3a;font-weight:400;letter-spacing:-0.34px;white-space:nowrap;">noreply@novacura.c...</div><div style="position:absolute;left:113.7px;top:131.05px;font-size:8.5px;line-height:10.20px;color:#3a3a3a;font-weight:400;letter-spacing:-0.34px;white-space:nowrap;">noreply@novacura.c...</div><div style="position:absolute;left:203.8px;top:131.05px;font-size:8.5px;line-height:10.20px;color:#3a3a3a;font-weight:400;letter-spacing:-0.34px;white-space:nowrap;">INVOICE TEST</div><svg style="position:absolute;left:6.05px;top:150.32499999999996px;" width="7" height="8" viewBox="0 0 7 8"><path d="M1.3 0.8 L6.2 4 L1.3 7.2 Z" fill="#9a9a9a"/></svg><div style="position:absolute;left:22.7px;top:149.2px;font-size:8.5px;line-height:10.20px;color:#3a3a3a;font-weight:400;letter-spacing:-0.34px;white-space:nowrap;">noreply@novacura.c...</div><div style="position:absolute;left:113.7px;top:149.2px;font-size:8.5px;line-height:10.20px;color:#3a3a3a;font-weight:400;letter-spacing:-0.34px;white-space:nowrap;">noreply@novacura.c...</div><div style="position:absolute;left:203.8px;top:149.2px;font-size:8.5px;line-height:10.20px;color:#3a3a3a;font-weight:400;letter-spacing:-0.34px;white-space:nowrap;">INVOICE TEST</div></div><div style="position:absolute;left:300px;top:246.3px;width:4px;height:163px;background:#fff;"></div><div style="position:absolute;left:300px;top:265px;width:4px;height:112.80000000000001px;background:#cfd0d2;border-radius:2px;"></div><div style="position:absolute;left:59px;top:409.6px;width:123px;height:4px;background:#cfd0d2;border-radius:2px;"></div><div style="position:absolute;left:59px;top:413.8px;width:245px;height:1px;background:rgba(0,0,0,0.105);"></div><svg style="position:absolute;left:67px;top:418.90000000000003px;" width="4" height="9" viewBox="0 0 4 9"><g fill="#333"><circle cx="2" cy="1.2" r="0.85"/><circle cx="2" cy="4.1" r="0.85"/><circle cx="2" cy="7.0" r="0.85"/></g></svg><div style="position:absolute;left:84px;top:416.50000000000006px;width:13px;height:14.4px;background:#f1f2f5;border-radius:5px;"></div><svg style="position:absolute;left:87.0px;top:419.70000000000005px;" width="7" height="8" viewBox="0 0 7 8"><path d="M3.6 1.2 L1 4 L3.6 6.8 M6.4 1.2 L3.8 4 L6.4 6.8" fill="none" stroke="#b8bcc4" stroke-width="0.8"/></svg><div style="position:absolute;left:99px;top:416.50000000000006px;width:13px;height:14.4px;background:#f1f2f5;border-radius:5px;"></div><svg style="position:absolute;left:103.0px;top:419.70000000000005px;" width="5" height="8" viewBox="0 0 5 8"><path d="M3.8 1 L1 4 L3.8 7" fill="none" stroke="#b8bcc4" stroke-width="0.8"/></svg><div style="position:absolute;left:114.8px;top:415.6px;width:15px;height:15px;background:#1470f5;border-radius:4px;"></div><div style="position:absolute;left:-27.700000000000003px;width:300px;text-align:center;top:418.65px;font-size:8.4px;line-height:10.08px;color:#fff;font-weight:700;letter-spacing:0px;white-space:nowrap;">1</div><div style="position:absolute;left:-12.0px;width:300px;text-align:center;top:418.66px;font-size:8.6px;line-height:10.32px;color:#555;font-weight:400;letter-spacing:0px;white-space:nowrap;">2</div><div style="position:absolute;left:3.5px;width:300px;text-align:center;top:418.66px;font-size:8.6px;line-height:10.32px;color:#555;font-weight:400;letter-spacing:0px;white-space:nowrap;">3</div><svg style="position:absolute;left:166.5px;top:419.70000000000005px;" width="5" height="8" viewBox="0 0 5 8"><path d="M1.2 1 L4 4 L1.2 7" fill="none" stroke="#b8bcc4" stroke-width="0.8"/></svg><svg style="position:absolute;left:181.0px;top:419.70000000000005px;" width="7" height="8" viewBox="0 0 7 8"><path d="M0.6 1.2 L3.2 4 L0.6 6.8 M3.4 1.2 L6 4 L3.4 6.8" fill="none" stroke="#b8bcc4" stroke-width="0.8"/></svg><div style="position:absolute;left:199.4px;top:415.90000000000003px;width:39.5px;height:14px;background:#f3f4f7;border:1px solid #e2e3e6;border-radius:4px;"></div><div style="position:absolute;left:203.9px;top:417.95px;font-size:8.5px;line-height:10.20px;color:#444;font-weight:400;letter-spacing:-0.2px;white-space:nowrap;">10</div><svg style="position:absolute;left:225.4px;top:419.90000000000003px;" width="9" height="6" viewBox="0 0 9 6"><path d="M1 1 L4.5 4.5 L8 1" fill="none" stroke="#444" stroke-width="1"/></svg><div style="position:absolute;left:244px;top:419.67px;font-size:6.9px;line-height:8.28px;color:#666;font-weight:400;letter-spacing:-0.13px;white-space:nowrap;">Items per page</div><div style="position:absolute;left:311.8px;top:228.5px;width:143.5px;height:204.4px;background:#fff;border-radius:5px;"></div><svg style="position:absolute;left:334px;top:263px;" width="100" height="100" viewBox="0 0 100 100"><path d="M50 50 L50.00 0.00 A50 50 0 1 1 38.26 98.60 Z" fill="#00b5a5"/><path d="M50 50 L38.26 98.60 A50 50 0 0 1 32.59 3.13 Z" fill="#3d3d3d"/><path d="M50 50 L32.59 3.13 A50 50 0 0 1 50.00 0.00 Z" fill="#3a7bd5"/></svg><div style="position:absolute;left:259.5px;width:300px;text-align:center;top:312.37px;font-size:7px;line-height:8.40px;color:#222;font-weight:400;letter-spacing:0px;white-space:nowrap;">57</div><div style="position:absolute;left:210.5px;width:300px;text-align:center;top:311.37px;font-size:7px;line-height:8.40px;color:#fff;font-weight:400;letter-spacing:0px;white-space:nowrap;">43</div><div style="position:absolute;left:230px;width:300px;text-align:center;top:285.37px;font-size:7px;line-height:8.40px;color:#fff;font-weight:400;letter-spacing:0px;white-space:nowrap;">6</div><svg style="position:absolute;left:320.2px;top:380.5px;" width="7" height="7" viewBox="0 0 7 7"><circle cx="3.5" cy="3.5" r="3.2" fill="#00b5a5"/><path d="M3.5 1.6 V3.6 H5.2" fill="none" stroke="#fff" stroke-width="0.6" opacity="0.6"/></svg><div style="position:absolute;left:331.7px;top:378.48px;font-size:9px;line-height:10.80px;color:#555;font-weight:400;letter-spacing:-0.4px;white-space:nowrap;">Loaded</div><svg style="position:absolute;left:371.1px;top:380.5px;" width="7" height="7" viewBox="0 0 7 7"><circle cx="3.5" cy="3.5" r="3.2" fill="#3d3d3d"/><path d="M3.5 1.6 V3.6 H5.2" fill="none" stroke="#fff" stroke-width="0.6" opacity="0.6"/></svg><div style="position:absolute;left:382.8px;top:378.48px;font-size:9px;line-height:10.80px;color:#555;font-weight:400;letter-spacing:-0.4px;white-space:nowrap;">Created</div><svg style="position:absolute;left:320.2px;top:396.0px;" width="7" height="7" viewBox="0 0 7 7"><circle cx="3.5" cy="3.5" r="3.2" fill="#3a7bd5"/><path d="M3.5 1.6 V3.6 H5.2" fill="none" stroke="#fff" stroke-width="0.6" opacity="0.6"/></svg><div style="position:absolute;left:331.7px;top:393.98px;font-size:9px;line-height:10.80px;color:#555;font-weight:400;letter-spacing:-0.4px;white-space:nowrap;">Checked</div><div style="position:absolute;left:464px;top:198.5px;width:801px;height:234.3px;background:#fff;border-radius:5px;"></div><div style="position:absolute;left:464px;top:215.8px;width:801px;height:1px;background:rgba(0,0,0,0.105);"></div><div style="position:absolute;left:534.8px;top:204.1px;width:71px;height:12.2px;background:#f3f4f7;border:1px solid rgba(0,0,0,0.105);border-bottom:none;border-radius:4px 4px 0 0;"></div><div style="position:absolute;left:539.8px;top:205.75px;font-size:8.5px;line-height:10.20px;color:#444;font-weight:400;letter-spacing:-0.3px;white-space:nowrap;">Invoice Tax Lines</div><div style="position:absolute;left:477.2px;top:200.4px;width:57.6px;height:16.5px;background:#fff;border:1px solid rgba(0,0,0,0.105);border-bottom:none;border-radius:4px 4px 0 0;"></div><div style="position:absolute;left:483.3px;top:202.75px;font-size:8.5px;line-height:10.20px;color:#4a86e0;font-weight:400;letter-spacing:-0.3px;white-space:nowrap;">Invoice Lines</div><svg style="position:absolute;left:1200.5px;top:204px;" width="8.5" height="8.5" viewBox="0 0 8.5 8.5"><path d="M1.4 7.3 L1.7 5.5 L5.9 1.3 Q6.6 0.6 7.3 1.3 Q8 2 7.3 2.7 L3.1 6.9 Z" fill="none" stroke="#5f5f5f" stroke-width="1.05" stroke-linejoin="round"/></svg><svg style="position:absolute;left:1216.5px;top:204px;" width="8.5" height="8.5" viewBox="0 0 8.5 8.5"><path d="M0.6 0.8 H7.6 L4.9 3.9 V7.6 L3.3 6.6 V3.9 Z" fill="none" stroke="#666" stroke-width="0.9" stroke-linejoin="round"/><rect x="5.4" y="5" width="2.6" height="2.8" fill="#fff" stroke="#666" stroke-width="0.7"/></svg><svg style="position:absolute;left:1232px;top:204px;" width="8.5" height="8.5" viewBox="0 0 8.5 8.5"><path d="M1.9 2.9 Q4 0.9 6.5 2.3" fill="none" stroke="#5a5a5a" stroke-width="1"/><path d="M5.5 1.6 L7.9 1.9 L6.9 3.9 Z" fill="#4a4a4a"/><path d="M6.6 5.7 Q4.4 8.0 1.9 6.2" fill="none" stroke="#5a5a5a" stroke-width="1"/><path d="M3.0 7.0 L0.6 6.6 L1.6 4.6 Z" fill="#4a4a4a"/></svg><svg style="position:absolute;left:1251.8px;top:203.3px;" width="4" height="9" viewBox="0 0 4 9"><g fill="#222"><circle cx="2" cy="1.2" r="0.9"/><circle cx="2" cy="4.4" r="0.9"/><circle cx="2" cy="7.6000000000000005" r="0.9"/></g></svg><div style="position:absolute;left:466.3px;top:220.4px;width:39.5px;height:13.8px;background:#fff;border:1px solid #dcdde0;border-radius:7px;"></div><svg style="position:absolute;left:471.5px;top:223.6px;" width="7" height="7.5" viewBox="0 0 7 7.5"><path d="M0.6 0.6 H5.2 L6.4 1.8 V6.8 H0.6 Z" fill="none" stroke="#666" stroke-width="0.8" stroke-linejoin="round"/><path d="M1.9 0.6 V2.4 H4.6 V0.6" fill="none" stroke="#666" stroke-width="0.7"/><path d="M1.7 6.8 V4.2 H5.3 V6.8" fill="none" stroke="#666" stroke-width="0.7"/></svg><div style="position:absolute;left:480.3px;top:223.86px;font-size:6.7px;line-height:8.04px;color:#505050;font-weight:700;letter-spacing:-0.15px;white-space:nowrap;">Update</div><div style="position:absolute;left:510.3px;top:220.4px;width:39px;height:13.8px;background:#fff;border:1px solid #dcdde0;border-radius:7px;"></div><svg style="position:absolute;left:515.3px;top:223.6px;" width="7" height="7.5" viewBox="0 0 7 7.5"><path d="M0.8 0.8 L6.2 6.6 M6.2 0.8 L0.8 6.6" stroke="#555" stroke-width="0.8"/></svg><div style="position:absolute;left:523.9px;top:223.86px;font-size:6.7px;line-height:8.04px;color:#505050;font-weight:700;letter-spacing:-0.1px;white-space:nowrap;">Cancel</div><div style="position:absolute;left:464px;top:236.0px;width:797px;height:173.0px;overflow:hidden;"><div style="position:absolute;left:0px;top:17.900000000000006px;width:997px;height:18px;background:#fff;border-bottom:1px solid rgba(0,0,0,0.105);"></div><div style="position:absolute;left:0px;top:35.900000000000006px;width:997px;height:18px;background:#fff;border-bottom:1px solid rgba(0,0,0,0.105);"></div><div style="position:absolute;left:0px;top:53.900000000000006px;width:997px;height:18px;background:#fff;border-bottom:1px solid rgba(0,0,0,0.105);"></div><div style="position:absolute;left:0px;top:0px;width:997px;height:17.900000000000006px;background:#f3f4f7;border-top:1px solid rgba(0,0,0,0.105);border-bottom:1px solid rgba(0,0,0,0.105);"></div><div style="position:absolute;left:89.79999999999995px;top:0px;width:1px;height:71.9px;background:rgba(0,0,0,0.105);"></div><div style="position:absolute;left:179.79999999999995px;top:0px;width:1px;height:71.9px;background:rgba(0,0,0,0.105);"></div><div style="position:absolute;left:270.5px;top:0px;width:1px;height:71.9px;background:rgba(0,0,0,0.105);"></div><div style="position:absolute;left:361.1px;top:0px;width:1px;height:71.9px;background:rgba(0,0,0,0.105);"></div><div style="position:absolute;left:451.79999999999995px;top:0px;width:1px;height:71.9px;background:rgba(0,0,0,0.105);"></div><div style="position:absolute;left:541.8px;top:0px;width:1px;height:71.9px;background:rgba(0,0,0,0.105);"></div><div style="position:absolute;left:632.5px;top:0px;width:1px;height:71.9px;background:rgba(0,0,0,0.105);"></div><div style="position:absolute;left:723.0px;top:0px;width:1px;height:71.9px;background:rgba(0,0,0,0.105);"></div><div style="position:absolute;left:796.5px;top:0px;width:1px;height:71.9px;background:rgba(0,0,0,0.105);"></div><div style="position:absolute;left:5.7px;top:3.55px;font-size:8.5px;line-height:10.20px;color:#333;font-weight:400;letter-spacing:-0.34px;white-space:nowrap;">Load Id</div><svg style="position:absolute;left:80.79999999999995px;top:3.950000000000003px;" width="3" height="8" viewBox="0 0 3 8"><g fill="#8a8a8a"><circle cx="1.5" cy="1.2" r="0.75"/><circle cx="1.5" cy="3.9" r="0.75"/><circle cx="1.5" cy="6.6" r="0.75"/></g></svg><div style="position:absolute;left:95.99999999999996px;top:3.55px;font-size:8.5px;line-height:10.20px;color:#333;font-weight:400;letter-spacing:-0.34px;white-space:nowrap;">Item Id</div><svg style="position:absolute;left:170.79999999999995px;top:3.950000000000003px;" width="3" height="8" viewBox="0 0 3 8"><g fill="#8a8a8a"><circle cx="1.5" cy="1.2" r="0.75"/><circle cx="1.5" cy="3.9" r="0.75"/><circle cx="1.5" cy="6.6" r="0.75"/></g></svg><div style="position:absolute;left:185.99999999999994px;top:3.55px;font-size:8.5px;line-height:10.20px;color:#333;font-weight:400;letter-spacing:-0.34px;white-space:nowrap;">VAT Code</div><svg style="position:absolute;left:261.5px;top:3.950000000000003px;" width="3" height="8" viewBox="0 0 3 8"><g fill="#8a8a8a"><circle cx="1.5" cy="1.2" r="0.75"/><circle cx="1.5" cy="3.9" r="0.75"/><circle cx="1.5" cy="6.6" r="0.75"/></g></svg><div style="position:absolute;left:276.7px;top:3.55px;font-size:8.5px;line-height:10.20px;color:#333;font-weight:400;letter-spacing:-0.34px;white-space:nowrap;">Tax Percentage</div><svg style="position:absolute;left:352.1px;top:3.950000000000003px;" width="3" height="8" viewBox="0 0 3 8"><g fill="#8a8a8a"><circle cx="1.5" cy="1.2" r="0.75"/><circle cx="1.5" cy="3.9" r="0.75"/><circle cx="1.5" cy="6.6" r="0.75"/></g></svg><div style="position:absolute;left:367.3px;top:3.55px;font-size:8.5px;line-height:10.20px;color:#333;font-weight:400;letter-spacing:-0.34px;white-space:nowrap;">VAT Curr Amount</div><svg style="position:absolute;left:442.79999999999995px;top:3.950000000000003px;" width="3" height="8" viewBox="0 0 3 8"><g fill="#8a8a8a"><circle cx="1.5" cy="1.2" r="0.75"/><circle cx="1.5" cy="3.9" r="0.75"/><circle cx="1.5" cy="6.6" r="0.75"/></g></svg><div style="position:absolute;left:457.99999999999994px;top:3.55px;font-size:8.5px;line-height:10.20px;color:#333;font-weight:400;letter-spacing:-0.34px;white-space:nowrap;">VAT Dom Amount</div><svg style="position:absolute;left:532.8px;top:3.950000000000003px;" width="3" height="8" viewBox="0 0 3 8"><g fill="#8a8a8a"><circle cx="1.5" cy="1.2" r="0.75"/><circle cx="1.5" cy="3.9" r="0.75"/><circle cx="1.5" cy="6.6" r="0.75"/></g></svg><div style="position:absolute;left:548.0px;top:3.55px;font-size:8.5px;line-height:10.20px;color:#333;font-weight:400;letter-spacing:-0.34px;white-space:nowrap;">Net Curr Amount</div><svg style="position:absolute;left:623.5px;top:3.950000000000003px;" width="3" height="8" viewBox="0 0 3 8"><g fill="#8a8a8a"><circle cx="1.5" cy="1.2" r="0.75"/><circle cx="1.5" cy="3.9" r="0.75"/><circle cx="1.5" cy="6.6" r="0.75"/></g></svg><div style="position:absolute;left:638.7px;top:3.55px;font-size:8.5px;line-height:10.20px;color:#333;font-weight:400;letter-spacing:-0.34px;white-space:nowrap;">Net Dom Amount</div><svg style="position:absolute;left:714.0px;top:3.950000000000003px;" width="3" height="8" viewBox="0 0 3 8"><g fill="#8a8a8a"><circle cx="1.5" cy="1.2" r="0.75"/><circle cx="1.5" cy="3.9" r="0.75"/><circle cx="1.5" cy="6.6" r="0.75"/></g></svg><div style="position:absolute;left:729.2px;top:3.55px;font-size:8.5px;line-height:10.20px;color:#333;font-weight:400;letter-spacing:-0.34px;white-space:nowrap;">PO Reference</div><div style="position:absolute;left:5.7px;top:21.45px;font-size:8.5px;line-height:10.20px;color:#3a3a3a;font-weight:400;letter-spacing:-0.34px;white-space:nowrap;">86</div><div style="position:absolute;left:-125.40000000000003px;width:300px;text-align:right;top:21.45px;font-size:8.5px;line-height:10.20px;color:#3a3a3a;font-weight:400;letter-spacing:-0.34px;white-space:nowrap;">1</div><div style="position:absolute;left:185.99999999999994px;top:21.45px;font-size:8.5px;line-height:10.20px;color:#3a3a3a;font-weight:400;letter-spacing:-0.34px;white-space:nowrap;">VAT-20 - VAT 20</div><div style="position:absolute;left:55.900000000000034px;width:300px;text-align:right;top:21.45px;font-size:8.5px;line-height:10.20px;color:#3a3a3a;font-weight:400;letter-spacing:-0.34px;white-space:nowrap;">20</div><div style="position:absolute;left:146.59999999999997px;width:300px;text-align:right;top:21.45px;font-size:8.5px;line-height:10.20px;color:#3a3a3a;font-weight:400;letter-spacing:-0.34px;white-space:nowrap;">203.71</div><div style="position:absolute;left:236.5999999999999px;width:300px;text-align:right;top:21.45px;font-size:8.5px;line-height:10.20px;color:#3a3a3a;font-weight:400;letter-spacing:-0.34px;white-space:nowrap;">203.71</div><div style="position:absolute;left:327.29999999999995px;width:300px;text-align:right;top:21.45px;font-size:8.5px;line-height:10.20px;color:#3a3a3a;font-weight:400;letter-spacing:-0.34px;white-space:nowrap;">1,018.56</div><div style="position:absolute;left:5.7px;top:39.45px;font-size:8.5px;line-height:10.20px;color:#3a3a3a;font-weight:400;letter-spacing:-0.34px;white-space:nowrap;">86</div><div style="position:absolute;left:-125.40000000000003px;width:300px;text-align:right;top:39.45px;font-size:8.5px;line-height:10.20px;color:#3a3a3a;font-weight:400;letter-spacing:-0.34px;white-space:nowrap;">2</div><div style="position:absolute;left:185.99999999999994px;top:39.45px;font-size:8.5px;line-height:10.20px;color:#3a3a3a;font-weight:400;letter-spacing:-0.34px;white-space:nowrap;">VAT-20 - VAT 20</div><div style="position:absolute;left:55.900000000000034px;width:300px;text-align:right;top:39.45px;font-size:8.5px;line-height:10.20px;color:#3a3a3a;font-weight:400;letter-spacing:-0.34px;white-space:nowrap;">20</div><div style="position:absolute;left:146.59999999999997px;width:300px;text-align:right;top:39.45px;font-size:8.5px;line-height:10.20px;color:#3a3a3a;font-weight:400;letter-spacing:-0.34px;white-space:nowrap;">1.15</div><div style="position:absolute;left:236.5999999999999px;width:300px;text-align:right;top:39.45px;font-size:8.5px;line-height:10.20px;color:#3a3a3a;font-weight:400;letter-spacing:-0.34px;white-space:nowrap;">1.15</div><div style="position:absolute;left:327.29999999999995px;width:300px;text-align:right;top:39.45px;font-size:8.5px;line-height:10.20px;color:#3a3a3a;font-weight:400;letter-spacing:-0.34px;white-space:nowrap;">5.76</div><div style="position:absolute;left:5.7px;top:57.45px;font-size:8.5px;line-height:10.20px;color:#3a3a3a;font-weight:400;letter-spacing:-0.34px;white-space:nowrap;">86</div><div style="position:absolute;left:-125.40000000000003px;width:300px;text-align:right;top:57.45px;font-size:8.5px;line-height:10.20px;color:#3a3a3a;font-weight:400;letter-spacing:-0.34px;white-space:nowrap;">3</div><div style="position:absolute;left:185.99999999999994px;top:57.45px;font-size:8.5px;line-height:10.20px;color:#3a3a3a;font-weight:400;letter-spacing:-0.34px;white-space:nowrap;">VAT-20 - VAT 20</div><div style="position:absolute;left:55.900000000000034px;width:300px;text-align:right;top:57.45px;font-size:8.5px;line-height:10.20px;color:#3a3a3a;font-weight:400;letter-spacing:-0.34px;white-space:nowrap;">20</div><div style="position:absolute;left:146.59999999999997px;width:300px;text-align:right;top:57.45px;font-size:8.5px;line-height:10.20px;color:#3a3a3a;font-weight:400;letter-spacing:-0.34px;white-space:nowrap;">30.00</div><div style="position:absolute;left:236.5999999999999px;width:300px;text-align:right;top:57.45px;font-size:8.5px;line-height:10.20px;color:#3a3a3a;font-weight:400;letter-spacing:-0.34px;white-space:nowrap;">30.00</div><div style="position:absolute;left:327.29999999999995px;width:300px;text-align:right;top:57.45px;font-size:8.5px;line-height:10.20px;color:#3a3a3a;font-weight:400;letter-spacing:-0.34px;white-space:nowrap;">150.00</div></div><div style="position:absolute;left:1260.5px;top:236.0px;width:1px;height:72px;background:rgba(0,0,0,0.105);"></div><div style="position:absolute;left:464px;top:236.0px;width:1px;height:173px;background:rgba(0,0,0,0.07);"></div><div style="position:absolute;left:464px;top:409.6px;width:780px;height:4px;background:#cfd0d2;border-radius:2px;"></div><div style="position:absolute;left:464px;top:414.8px;width:801px;height:1px;background:rgba(0,0,0,0.105);"></div><svg style="position:absolute;left:472px;top:419.5px;" width="4" height="9" viewBox="0 0 4 9"><g fill="#333"><circle cx="2" cy="1.2" r="0.85"/><circle cx="2" cy="4.1" r="0.85"/><circle cx="2" cy="7.0" r="0.85"/></g></svg><div style="position:absolute;left:488.8px;top:417.1px;width:15px;height:14.4px;background:#f1f2f5;border-radius:5px;"></div><svg style="position:absolute;left:492.8px;top:420.3px;" width="7" height="8" viewBox="0 0 7 8"><path d="M3.6 1.2 L1 4 L3.6 6.8 M6.4 1.2 L3.8 4 L6.4 6.8" fill="none" stroke="#b8bcc4" stroke-width="0.8"/></svg><div style="position:absolute;left:504px;top:417.1px;width:15px;height:14.4px;background:#f1f2f5;border-radius:5px;"></div><svg style="position:absolute;left:509.0px;top:420.3px;" width="5" height="8" viewBox="0 0 5 8"><path d="M3.8 1 L1 4 L3.8 7" fill="none" stroke="#b8bcc4" stroke-width="0.8"/></svg><div style="position:absolute;left:520px;top:416.2px;width:15.6px;height:15px;background:#1470f5;border-radius:4px;"></div><div style="position:absolute;left:377.79999999999995px;width:300px;text-align:center;top:419.25px;font-size:8.4px;line-height:10.08px;color:#fff;font-weight:700;letter-spacing:0px;white-space:nowrap;">1</div><div style="position:absolute;left:536px;top:417.1px;width:15px;height:14.4px;background:#f1f2f5;border-radius:5px;"></div><svg style="position:absolute;left:541.0px;top:420.3px;" width="5" height="8" viewBox="0 0 5 8"><path d="M1.2 1 L4 4 L1.2 7" fill="none" stroke="#b8bcc4" stroke-width="0.8"/></svg><div style="position:absolute;left:551px;top:417.1px;width:15px;height:14.4px;background:#f1f2f5;border-radius:5px;"></div><svg style="position:absolute;left:555.0px;top:420.3px;" width="7" height="8" viewBox="0 0 7 8"><path d="M0.6 1.2 L3.2 4 L0.6 6.8 M3.4 1.2 L6 4 L3.4 6.8" fill="none" stroke="#b8bcc4" stroke-width="0.8"/></svg><div style="position:absolute;left:574px;top:416.5px;width:39.5px;height:14px;background:#f3f4f7;border:1px solid #e2e3e6;border-radius:4px;"></div><div style="position:absolute;left:578.5px;top:418.55px;font-size:8.5px;line-height:10.20px;color:#444;font-weight:400;letter-spacing:-0.2px;white-space:nowrap;">10</div><svg style="position:absolute;left:600px;top:420.5px;" width="9" height="6" viewBox="0 0 9 6"><path d="M1 1 L4.5 4.5 L8 1" fill="none" stroke="#444" stroke-width="1"/></svg><div style="position:absolute;left:618px;top:420.27px;font-size:6.9px;line-height:8.28px;color:#666;font-weight:400;letter-spacing:-0.13px;white-space:nowrap;">Items per page</div><div style="position:absolute;left:962.5px;width:300px;text-align:right;top:420.27px;font-size:6.9px;line-height:8.28px;color:#666;font-weight:400;letter-spacing:-0.1px;white-space:nowrap;">1 of 1 pages (3 items)</div><div style="position:absolute;left:59.2px;top:439.5px;width:92.3px;height:83.2px;background:#fff;border-radius:5px;"></div><div style="position:absolute;left:148px;top:440px;width:3.5px;height:82.5px;background:#d3d4d6;border-radius:2px;"></div><svg style="position:absolute;left:81px;top:452px;" width="38" height="38" viewBox="0 0 38 38"><circle cx="19" cy="19" r="19" fill="#3d2ff5"/><g fill="none" stroke="#a99ef7" stroke-width="1.3"><rect x="11.7" y="19.8" width="14.6" height="5.6" rx="1.8"/><path d="M15.8 19.8 Q19 23 22.2 19.8"/></g><g fill="#a99ef7"><rect x="13" y="13.5" width="11" height="1.2"/><rect x="13" y="15.6" width="11" height="1.2"/><rect x="13" y="17.7" width="11" height="1.2"/></g></svg><div style="position:absolute;left:-49.7px;width:300px;text-align:center;top:492.62px;font-size:7.8px;line-height:9.36px;color:#333;font-weight:700;letter-spacing:-0.35px;white-space:nowrap;">Load Invoice</div><div style="position:absolute;left:58.9px;top:530.2px;width:92.8px;height:83.8px;background:#4ea9e1;border-radius:6px;"></div><div style="position:absolute;left:-44.7px;width:300px;text-align:center;top:531.43px;font-size:8px;line-height:9.60px;color:#f4f9ff;font-weight:400;letter-spacing:-0.2px;white-space:nowrap;">Invoices</div><div style="position:absolute;left:-45.7px;width:300px;text-align:center;top:555.5px;font-size:28px;line-height:33.60px;color:#fff;font-weight:400;letter-spacing:-1.5px;white-space:nowrap;">831</div><div style="position:absolute;left:58.9px;top:620.7px;width:92.8px;height:30px;background:#ff9b34;border-radius:6px;"></div><div style="position:absolute;left:-44.7px;width:300px;text-align:center;top:622.46px;font-size:6.7px;line-height:8.04px;color:#fff8ee;font-weight:400;letter-spacing:-0.25px;white-space:nowrap;">Load Ids With Errors/Low</div><div style="position:absolute;left:-44.7px;width:300px;text-align:center;top:629.86px;font-size:6.7px;line-height:8.04px;color:#fff8ee;font-weight:400;letter-spacing:-0.25px;white-space:nowrap;">Confidence</div><div style="position:absolute;left:160.2px;top:439.9px;width:598.6px;height:200px;background:#fff;border-radius:5px;"></div><div style="position:absolute;left:167.6px;top:442.55px;font-size:8.5px;line-height:10.20px;color:#666;font-weight:400;letter-spacing:-0.34px;white-space:nowrap;">Open Supplier Invoices</div><svg style="position:absolute;left:708px;top:444.6px;" width="8.5" height="8.5" viewBox="0 0 8.5 8.5"><path d="M1.4 7.3 L1.7 5.5 L5.9 1.3 Q6.6 0.6 7.3 1.3 Q8 2 7.3 2.7 L3.1 6.9 Z" fill="none" stroke="#5f5f5f" stroke-width="1.05" stroke-linejoin="round"/></svg><svg style="position:absolute;left:723px;top:444.6px;" width="8.5" height="8.5" viewBox="0 0 8.5 8.5"><path d="M1.9 2.9 Q4 0.9 6.5 2.3" fill="none" stroke="#5a5a5a" stroke-width="1"/><path d="M5.5 1.6 L7.9 1.9 L6.9 3.9 Z" fill="#4a4a4a"/><path d="M6.6 5.7 Q4.4 8.0 1.9 6.2" fill="none" stroke="#5a5a5a" stroke-width="1"/><path d="M3.0 7.0 L0.6 6.6 L1.6 4.6 Z" fill="#4a4a4a"/></svg><svg style="position:absolute;left:743px;top:444.5px;" width="4" height="9" viewBox="0 0 4 9"><g fill="#222"><circle cx="2" cy="1.2" r="0.9"/><circle cx="2" cy="4.4" r="0.9"/><circle cx="2" cy="7.6000000000000005" r="0.9"/></g></svg><div style="position:absolute;left:160.2px;top:457.4px;width:594.4000000000001px;height:178.10000000000002px;overflow:hidden;"><div style="position:absolute;left:0px;top:18.100000000000023px;width:794.4000000000001px;height:18.85px;background:#fff;border-bottom:1px solid rgba(0,0,0,0.105);"></div><div style="position:absolute;left:0px;top:36.950000000000024px;width:794.4000000000001px;height:18.85px;background:#fff;border-bottom:1px solid rgba(0,0,0,0.105);"></div><div style="position:absolute;left:0px;top:55.800000000000026px;width:794.4000000000001px;height:18.85px;background:#fff;border-bottom:1px solid rgba(0,0,0,0.105);"></div><div style="position:absolute;left:0px;top:74.65000000000003px;width:794.4000000000001px;height:18.85px;background:#fff;border-bottom:1px solid rgba(0,0,0,0.105);"></div><div style="position:absolute;left:0px;top:93.50000000000003px;width:794.4000000000001px;height:18.85px;background:#fff;border-bottom:1px solid rgba(0,0,0,0.105);"></div><div style="position:absolute;left:0px;top:112.35000000000002px;width:794.4000000000001px;height:18.85px;background:#fff;border-bottom:1px solid rgba(0,0,0,0.105);"></div><div style="position:absolute;left:0px;top:131.20000000000005px;width:794.4000000000001px;height:18.85px;background:#fff;border-bottom:1px solid rgba(0,0,0,0.105);"></div><div style="position:absolute;left:0px;top:150.05000000000004px;width:794.4000000000001px;height:18.85px;background:#fff;border-bottom:1px solid rgba(0,0,0,0.105);"></div><div style="position:absolute;left:0px;top:168.90000000000003px;width:794.4000000000001px;height:18.85px;background:#fff;border-bottom:1px solid rgba(0,0,0,0.105);"></div><div style="position:absolute;left:0px;top:187.75000000000003px;width:794.4000000000001px;height:18.85px;background:#fff;border-bottom:1px solid rgba(0,0,0,0.105);"></div><div style="position:absolute;left:0px;top:0px;width:794.4000000000001px;height:18.100000000000023px;background:#f3f4f7;border-top:1px solid rgba(0,0,0,0.105);border-bottom:1px solid rgba(0,0,0,0.105);"></div><div style="position:absolute;left:89.9px;top:0px;width:1px;height:206.60000000000002px;background:rgba(0,0,0,0.105);"></div><div style="position:absolute;left:179.90000000000003px;top:0px;width:1px;height:206.60000000000002px;background:rgba(0,0,0,0.105);"></div><div style="position:absolute;left:270.90000000000003px;top:0px;width:1px;height:206.60000000000002px;background:rgba(0,0,0,0.105);"></div><div style="position:absolute;left:361.40000000000003px;top:0px;width:1px;height:206.60000000000002px;background:rgba(0,0,0,0.105);"></div><div style="position:absolute;left:452.00000000000006px;top:0px;width:1px;height:206.60000000000002px;background:rgba(0,0,0,0.105);"></div><div style="position:absolute;left:542.5px;top:0px;width:1px;height:206.60000000000002px;background:rgba(0,0,0,0.105);"></div><div style="position:absolute;left:593.9000000000001px;top:0px;width:1px;height:206.60000000000002px;background:rgba(0,0,0,0.105);"></div><div style="position:absolute;left:5.9px;top:3.45px;font-size:8.5px;line-height:10.20px;color:#333;font-weight:400;letter-spacing:-0.34px;white-space:nowrap;">Invoice Id</div><svg style="position:absolute;left:80.9px;top:4.050000000000011px;" width="3" height="8" viewBox="0 0 3 8"><g fill="#8a8a8a"><circle cx="1.5" cy="1.2" r="0.75"/><circle cx="1.5" cy="3.9" r="0.75"/><circle cx="1.5" cy="6.6" r="0.75"/></g></svg><div style="position:absolute;left:96.30000000000001px;top:3.45px;font-size:8.5px;line-height:10.20px;color:#333;font-weight:400;letter-spacing:-0.34px;white-space:nowrap;">Supplier Id</div><svg style="position:absolute;left:170.90000000000003px;top:4.050000000000011px;" width="3" height="8" viewBox="0 0 3 8"><g fill="#8a8a8a"><circle cx="1.5" cy="1.2" r="0.75"/><circle cx="1.5" cy="3.9" r="0.75"/><circle cx="1.5" cy="6.6" r="0.75"/></g></svg><div style="position:absolute;left:186.30000000000004px;top:3.45px;font-size:8.5px;line-height:10.20px;color:#333;font-weight:400;letter-spacing:-0.34px;white-space:nowrap;">Supplier Name</div><svg style="position:absolute;left:261.90000000000003px;top:4.050000000000011px;" width="3" height="8" viewBox="0 0 3 8"><g fill="#8a8a8a"><circle cx="1.5" cy="1.2" r="0.75"/><circle cx="1.5" cy="3.9" r="0.75"/><circle cx="1.5" cy="6.6" r="0.75"/></g></svg><div style="position:absolute;left:277.3px;top:3.45px;font-size:8.5px;line-height:10.20px;color:#333;font-weight:400;letter-spacing:-0.34px;white-space:nowrap;">Series Id</div><svg style="position:absolute;left:352.40000000000003px;top:4.050000000000011px;" width="3" height="8" viewBox="0 0 3 8"><g fill="#8a8a8a"><circle cx="1.5" cy="1.2" r="0.75"/><circle cx="1.5" cy="3.9" r="0.75"/><circle cx="1.5" cy="6.6" r="0.75"/></g></svg><div style="position:absolute;left:367.8px;top:3.45px;font-size:8.5px;line-height:10.20px;color:#333;font-weight:400;letter-spacing:-0.34px;white-space:nowrap;">Invoice No</div><svg style="position:absolute;left:443.00000000000006px;top:4.050000000000011px;" width="3" height="8" viewBox="0 0 3 8"><g fill="#8a8a8a"><circle cx="1.5" cy="1.2" r="0.75"/><circle cx="1.5" cy="3.9" r="0.75"/><circle cx="1.5" cy="6.6" r="0.75"/></g></svg><div style="position:absolute;left:458.40000000000003px;top:3.45px;font-size:8.5px;line-height:10.20px;color:#333;font-weight:400;letter-spacing:-0.34px;white-space:nowrap;">Invoice Date</div><svg style="position:absolute;left:533.5px;top:4.050000000000011px;" width="3" height="8" viewBox="0 0 3 8"><g fill="#8a8a8a"><circle cx="1.5" cy="1.2" r="0.75"/><circle cx="1.5" cy="3.9" r="0.75"/><circle cx="1.5" cy="6.6" r="0.75"/></g></svg><div style="position:absolute;left:548.9px;top:3.45px;font-size:8.5px;line-height:10.20px;color:#333;font-weight:400;letter-spacing:-0.34px;white-space:nowrap;">Due Date</div><div style="position:absolute;left:5.9px;top:22.05px;font-size:8.5px;line-height:10.20px;color:#3a3a3a;font-weight:400;letter-spacing:-0.34px;white-space:nowrap;">210717</div><div style="position:absolute;left:96.30000000000001px;top:22.05px;font-size:8.5px;line-height:10.20px;color:#3a3a3a;font-weight:400;letter-spacing:-0.34px;white-space:nowrap;">02HAIN</div><div style="position:absolute;left:186.30000000000004px;top:22.05px;font-size:8.5px;line-height:10.20px;color:#3a3a3a;font-weight:400;letter-spacing:-0.34px;white-space:nowrap;">Hainnes</div><div style="position:absolute;left:277.3px;top:22.05px;font-size:8.5px;line-height:10.20px;color:#3a3a3a;font-weight:400;letter-spacing:-0.34px;white-space:nowrap;">SI</div><div style="position:absolute;left:367.8px;top:22.05px;font-size:8.5px;line-height:10.20px;color:#3a3a3a;font-weight:400;letter-spacing:-0.34px;white-space:nowrap;">12345</div><div style="position:absolute;left:458.40000000000003px;top:22.05px;font-size:8.5px;line-height:10.20px;color:#3a3a3a;font-weight:400;letter-spacing:-0.34px;white-space:nowrap;">5/10/23</div><div style="position:absolute;left:548.9px;top:22.05px;font-size:8.5px;line-height:10.20px;color:#3a3a3a;font-weight:400;letter-spacing:-0.34px;white-space:nowrap;">5/30/23</div><div style="position:absolute;left:5.9px;top:40.9px;font-size:8.5px;line-height:10.20px;color:#3a3a3a;font-weight:400;letter-spacing:-0.34px;white-space:nowrap;">210718</div><div style="position:absolute;left:96.30000000000001px;top:40.9px;font-size:8.5px;line-height:10.20px;color:#3a3a3a;font-weight:400;letter-spacing:-0.34px;white-space:nowrap;">02HAIN</div><div style="position:absolute;left:186.30000000000004px;top:40.9px;font-size:8.5px;line-height:10.20px;color:#3a3a3a;font-weight:400;letter-spacing:-0.34px;white-space:nowrap;">Hainnes</div><div style="position:absolute;left:277.3px;top:40.9px;font-size:8.5px;line-height:10.20px;color:#3a3a3a;font-weight:400;letter-spacing:-0.34px;white-space:nowrap;">SI</div><div style="position:absolute;left:367.8px;top:40.9px;font-size:8.5px;line-height:10.20px;color:#3a3a3a;font-weight:400;letter-spacing:-0.34px;white-space:nowrap;">0017</div><div style="position:absolute;left:458.40000000000003px;top:40.9px;font-size:8.5px;line-height:10.20px;color:#3a3a3a;font-weight:400;letter-spacing:-0.34px;white-space:nowrap;">5/10/23</div><div style="position:absolute;left:548.9px;top:40.9px;font-size:8.5px;line-height:10.20px;color:#3a3a3a;font-weight:400;letter-spacing:-0.34px;white-space:nowrap;">5/30/23</div><div style="position:absolute;left:5.9px;top:59.75px;font-size:8.5px;line-height:10.20px;color:#3a3a3a;font-weight:400;letter-spacing:-0.34px;white-space:nowrap;">210919</div><div style="position:absolute;left:96.30000000000001px;top:59.75px;font-size:8.5px;line-height:10.20px;color:#3a3a3a;font-weight:400;letter-spacing:-0.34px;white-space:nowrap;">02HAIN</div><div style="position:absolute;left:186.30000000000004px;top:59.75px;font-size:8.5px;line-height:10.20px;color:#3a3a3a;font-weight:400;letter-spacing:-0.34px;white-space:nowrap;">Hainnes</div><div style="position:absolute;left:277.3px;top:59.75px;font-size:8.5px;line-height:10.20px;color:#3a3a3a;font-weight:400;letter-spacing:-0.34px;white-space:nowrap;">EA</div><div style="position:absolute;left:367.8px;top:59.75px;font-size:8.5px;line-height:10.20px;color:#3a3a3a;font-weight:400;letter-spacing:-0.34px;white-space:nowrap;">TEST100</div><div style="position:absolute;left:458.40000000000003px;top:59.75px;font-size:8.5px;line-height:10.20px;color:#3a3a3a;font-weight:400;letter-spacing:-0.34px;white-space:nowrap;">5/18/23</div><div style="position:absolute;left:548.9px;top:59.75px;font-size:8.5px;line-height:10.20px;color:#3a3a3a;font-weight:400;letter-spacing:-0.34px;white-space:nowrap;">6/7/23</div><div style="position:absolute;left:5.9px;top:78.6px;font-size:8.5px;line-height:10.20px;color:#3a3a3a;font-weight:400;letter-spacing:-0.34px;white-space:nowrap;">210719</div><div style="position:absolute;left:96.30000000000001px;top:78.6px;font-size:8.5px;line-height:10.20px;color:#3a3a3a;font-weight:400;letter-spacing:-0.34px;white-space:nowrap;">02HAIN</div><div style="position:absolute;left:186.30000000000004px;top:78.6px;font-size:8.5px;line-height:10.20px;color:#3a3a3a;font-weight:400;letter-spacing:-0.34px;white-space:nowrap;">Hainnes</div><div style="position:absolute;left:277.3px;top:78.6px;font-size:8.5px;line-height:10.20px;color:#3a3a3a;font-weight:400;letter-spacing:-0.34px;white-space:nowrap;">SI</div><div style="position:absolute;left:367.8px;top:78.6px;font-size:8.5px;line-height:10.20px;color:#3a3a3a;font-weight:400;letter-spacing:-0.34px;white-space:nowrap;">008</div><div style="position:absolute;left:458.40000000000003px;top:78.6px;font-size:8.5px;line-height:10.20px;color:#3a3a3a;font-weight:400;letter-spacing:-0.34px;white-space:nowrap;">5/10/23</div><div style="position:absolute;left:548.9px;top:78.6px;font-size:8.5px;line-height:10.20px;color:#3a3a3a;font-weight:400;letter-spacing:-0.34px;white-space:nowrap;">5/30/23</div><div style="position:absolute;left:5.9px;top:97.45px;font-size:8.5px;line-height:10.20px;color:#3a3a3a;font-weight:400;letter-spacing:-0.34px;white-space:nowrap;">210883</div><div style="position:absolute;left:96.30000000000001px;top:97.45px;font-size:8.5px;line-height:10.20px;color:#3a3a3a;font-weight:400;letter-spacing:-0.34px;white-space:nowrap;">02HAIN</div><div style="position:absolute;left:186.30000000000004px;top:97.45px;font-size:8.5px;line-height:10.20px;color:#3a3a3a;font-weight:400;letter-spacing:-0.34px;white-space:nowrap;">Hainnes</div><div style="position:absolute;left:277.3px;top:97.45px;font-size:8.5px;line-height:10.20px;color:#3a3a3a;font-weight:400;letter-spacing:-0.34px;white-space:nowrap;">SI</div><div style="position:absolute;left:367.8px;top:97.45px;font-size:8.5px;line-height:10.20px;color:#3a3a3a;font-weight:400;letter-spacing:-0.34px;white-space:nowrap;">TEST</div><div style="position:absolute;left:458.40000000000003px;top:97.45px;font-size:8.5px;line-height:10.20px;color:#3a3a3a;font-weight:400;letter-spacing:-0.34px;white-space:nowrap;">5/17/23</div><div style="position:absolute;left:548.9px;top:97.45px;font-size:8.5px;line-height:10.20px;color:#3a3a3a;font-weight:400;letter-spacing:-0.34px;white-space:nowrap;">6/6/23</div><div style="position:absolute;left:5.9px;top:116.3px;font-size:8.5px;line-height:10.20px;color:#3a3a3a;font-weight:400;letter-spacing:-0.34px;white-space:nowrap;">210924</div><div style="position:absolute;left:96.30000000000001px;top:116.3px;font-size:8.5px;line-height:10.20px;color:#3a3a3a;font-weight:400;letter-spacing:-0.34px;white-space:nowrap;">02HAIN</div><div style="position:absolute;left:186.30000000000004px;top:116.3px;font-size:8.5px;line-height:10.20px;color:#3a3a3a;font-weight:400;letter-spacing:-0.34px;white-space:nowrap;">Hainnes</div><div style="position:absolute;left:277.3px;top:116.3px;font-size:8.5px;line-height:10.20px;color:#3a3a3a;font-weight:400;letter-spacing:-0.34px;white-space:nowrap;">SI</div><div style="position:absolute;left:367.8px;top:116.3px;font-size:8.5px;line-height:10.20px;color:#3a3a3a;font-weight:400;letter-spacing:-0.34px;white-space:nowrap;">TEST101</div><div style="position:absolute;left:458.40000000000003px;top:116.3px;font-size:8.5px;line-height:10.20px;color:#3a3a3a;font-weight:400;letter-spacing:-0.34px;white-space:nowrap;">5/19/23</div><div style="position:absolute;left:548.9px;top:116.3px;font-size:8.5px;line-height:10.20px;color:#3a3a3a;font-weight:400;letter-spacing:-0.34px;white-space:nowrap;">6/8/23</div><div style="position:absolute;left:5.9px;top:135.15px;font-size:8.5px;line-height:10.20px;color:#3a3a3a;font-weight:400;letter-spacing:-0.34px;white-space:nowrap;">210795</div><div style="position:absolute;left:96.30000000000001px;top:135.15px;font-size:8.5px;line-height:10.20px;color:#3a3a3a;font-weight:400;letter-spacing:-0.34px;white-space:nowrap;">02HAIN</div><div style="position:absolute;left:186.30000000000004px;top:135.15px;font-size:8.5px;line-height:10.20px;color:#3a3a3a;font-weight:400;letter-spacing:-0.34px;white-space:nowrap;">Hainnes</div><div style="position:absolute;left:277.3px;top:135.15px;font-size:8.5px;line-height:10.20px;color:#3a3a3a;font-weight:400;letter-spacing:-0.34px;white-space:nowrap;">SI</div><div style="position:absolute;left:367.8px;top:135.15px;font-size:8.5px;line-height:10.20px;color:#3a3a3a;font-weight:400;letter-spacing:-0.34px;white-space:nowrap;">100</div><div style="position:absolute;left:458.40000000000003px;top:135.15px;font-size:8.5px;line-height:10.20px;color:#3a3a3a;font-weight:400;letter-spacing:-0.34px;white-space:nowrap;">5/12/23</div><div style="position:absolute;left:548.9px;top:135.15px;font-size:8.5px;line-height:10.20px;color:#3a3a3a;font-weight:400;letter-spacing:-0.34px;white-space:nowrap;">6/1/23</div><div style="position:absolute;left:5.9px;top:154.0px;font-size:8.5px;line-height:10.20px;color:#3a3a3a;font-weight:400;letter-spacing:-0.34px;white-space:nowrap;">210767</div><div style="position:absolute;left:96.30000000000001px;top:154.0px;font-size:8.5px;line-height:10.20px;color:#3a3a3a;font-weight:400;letter-spacing:-0.34px;white-space:nowrap;">02HAIN</div><div style="position:absolute;left:186.30000000000004px;top:154.0px;font-size:8.5px;line-height:10.20px;color:#3a3a3a;font-weight:400;letter-spacing:-0.34px;white-space:nowrap;">Hainnes</div><div style="position:absolute;left:277.3px;top:154.0px;font-size:8.5px;line-height:10.20px;color:#3a3a3a;font-weight:400;letter-spacing:-0.34px;white-space:nowrap;">SI</div><div style="position:absolute;left:367.8px;top:154.0px;font-size:8.5px;line-height:10.20px;color:#3a3a3a;font-weight:400;letter-spacing:-0.34px;white-space:nowrap;">UGA2</div><div style="position:absolute;left:458.40000000000003px;top:154.0px;font-size:8.5px;line-height:10.20px;color:#3a3a3a;font-weight:400;letter-spacing:-0.34px;white-space:nowrap;">5/11/23</div><div style="position:absolute;left:548.9px;top:154.0px;font-size:8.5px;line-height:10.20px;color:#3a3a3a;font-weight:400;letter-spacing:-0.34px;white-space:nowrap;">5/31/23</div><div style="position:absolute;left:5.9px;top:172.85px;font-size:8.5px;line-height:10.20px;color:#3a3a3a;font-weight:400;letter-spacing:-0.34px;white-space:nowrap;">210931</div><div style="position:absolute;left:96.30000000000001px;top:172.85px;font-size:8.5px;line-height:10.20px;color:#3a3a3a;font-weight:400;letter-spacing:-0.34px;white-space:nowrap;">02HAIN</div><div style="position:absolute;left:186.30000000000004px;top:172.85px;font-size:8.5px;line-height:10.20px;color:#3a3a3a;font-weight:400;letter-spacing:-0.34px;white-space:nowrap;">Hainnes</div><div style="position:absolute;left:277.3px;top:172.85px;font-size:8.5px;line-height:10.20px;color:#3a3a3a;font-weight:400;letter-spacing:-0.34px;white-space:nowrap;">EA</div><div style="position:absolute;left:367.8px;top:172.85px;font-size:8.5px;line-height:10.20px;color:#3a3a3a;font-weight:400;letter-spacing:-0.34px;white-space:nowrap;">TEST102</div><div style="position:absolute;left:458.40000000000003px;top:172.85px;font-size:8.5px;line-height:10.20px;color:#3a3a3a;font-weight:400;letter-spacing:-0.34px;white-space:nowrap;">5/19/23</div><div style="position:absolute;left:548.9px;top:172.85px;font-size:8.5px;line-height:10.20px;color:#3a3a3a;font-weight:400;letter-spacing:-0.34px;white-space:nowrap;">6/8/23</div><div style="position:absolute;left:5.9px;top:191.7px;font-size:8.5px;line-height:10.20px;color:#3a3a3a;font-weight:400;letter-spacing:-0.34px;white-space:nowrap;">210932</div><div style="position:absolute;left:96.30000000000001px;top:191.7px;font-size:8.5px;line-height:10.20px;color:#3a3a3a;font-weight:400;letter-spacing:-0.34px;white-space:nowrap;">02HAIN</div><div style="position:absolute;left:186.30000000000004px;top:191.7px;font-size:8.5px;line-height:10.20px;color:#3a3a3a;font-weight:400;letter-spacing:-0.34px;white-space:nowrap;">Hainnes</div><div style="position:absolute;left:277.3px;top:191.7px;font-size:8.5px;line-height:10.20px;color:#3a3a3a;font-weight:400;letter-spacing:-0.34px;white-space:nowrap;">EA</div><div style="position:absolute;left:367.8px;top:191.7px;font-size:8.5px;line-height:10.20px;color:#3a3a3a;font-weight:400;letter-spacing:-0.34px;white-space:nowrap;">TEST103</div><div style="position:absolute;left:458.40000000000003px;top:191.7px;font-size:8.5px;line-height:10.20px;color:#3a3a3a;font-weight:400;letter-spacing:-0.34px;white-space:nowrap;">5/19/23</div><div style="position:absolute;left:548.9px;top:191.7px;font-size:8.5px;line-height:10.20px;color:#3a3a3a;font-weight:400;letter-spacing:-0.34px;white-space:nowrap;">6/8/23</div></div><div style="position:absolute;left:754.1px;top:457.4px;width:1px;height:180px;background:rgba(0,0,0,0.105);"></div><div style="position:absolute;left:767.6px;top:439.8px;width:497.4px;height:200px;background:#fff;border-radius:5px;"></div><div style="position:absolute;left:775px;top:442.65px;font-size:8.5px;line-height:10.20px;color:#666;font-weight:400;letter-spacing:-0.34px;white-space:nowrap;">Invoice Preview</div><svg style="position:absolute;left:1198px;top:444.6px;" width="8.5" height="8.5" viewBox="0 0 8.5 8.5"><path d="M1.4 7.3 L1.7 5.5 L5.9 1.3 Q6.6 0.6 7.3 1.3 Q8 2 7.3 2.7 L3.1 6.9 Z" fill="none" stroke="#5f5f5f" stroke-width="1.05" stroke-linejoin="round"/></svg><svg style="position:absolute;left:1214px;top:444.6px;" width="8.5" height="8.5" viewBox="0 0 8.5 8.5"><path d="M0.6 0.8 H7.6 L4.9 3.9 V7.6 L3.3 6.6 V3.9 Z" fill="none" stroke="#666" stroke-width="0.9" stroke-linejoin="round"/><rect x="5.4" y="5" width="2.6" height="2.8" fill="#fff" stroke="#666" stroke-width="0.7"/></svg><svg style="position:absolute;left:1229.5px;top:444.6px;" width="8.5" height="8.5" viewBox="0 0 8.5 8.5"><path d="M1.9 2.9 Q4 0.9 6.5 2.3" fill="none" stroke="#5a5a5a" stroke-width="1"/><path d="M5.5 1.6 L7.9 1.9 L6.9 3.9 Z" fill="#4a4a4a"/><path d="M6.6 5.7 Q4.4 8.0 1.9 6.2" fill="none" stroke="#5a5a5a" stroke-width="1"/><path d="M3.0 7.0 L0.6 6.6 L1.6 4.6 Z" fill="#4a4a4a"/></svg><svg style="position:absolute;left:1249.3px;top:444.5px;" width="4" height="9" viewBox="0 0 4 9"><g fill="#222"><circle cx="2" cy="1.2" r="0.9"/><circle cx="2" cy="4.4" r="0.9"/><circle cx="2" cy="7.6000000000000005" r="0.9"/></g></svg><div style="position:absolute;left:767.6px;top:457.2px;width:497.4px;height:1px;background:rgba(0,0,0,0.105);"></div><div style="position:absolute;left:767.6px;top:481.8px;width:497.4px;height:1px;background:rgba(0,0,0,0.105);"></div><svg style="position:absolute;left:775px;top:465px;" width="9" height="10" viewBox="0 0 9 10"><path d="M1 1 V9 M8 1 L4 5 L8 9" fill="none" stroke="#c4c7cc" stroke-width="0.9"/></svg><svg style="position:absolute;left:797px;top:465px;" width="9" height="10" viewBox="0 0 9 10"><path d="M6.5 1 L2.5 5 L6.5 9" fill="none" stroke="#c4c7cc" stroke-width="0.9"/></svg><svg style="position:absolute;left:818px;top:465px;" width="9" height="10" viewBox="0 0 9 10"><path d="M2.5 1 L6.5 5 L2.5 9" fill="none" stroke="#c4c7cc" stroke-width="0.9"/></svg><svg style="position:absolute;left:840px;top:465px;" width="9" height="10" viewBox="0 0 9 10"><path d="M1 1 L5 5 L1 9 M8 1 V9" fill="none" stroke="#c4c7cc" stroke-width="0.9"/></svg><div style="position:absolute;left:858.6px;top:460.8px;width:22px;height:19.7px;background:#f3f4f7;border:1px solid #e0e1e4;border-radius:4px;"></div><div style="position:absolute;left:719.6px;width:300px;text-align:center;top:465.93px;font-size:8px;line-height:9.60px;color:#333;font-weight:400;letter-spacing:0px;white-space:nowrap;">1</div><div style="position:absolute;left:884px;top:465.93px;font-size:8px;line-height:9.60px;color:#333;font-weight:400;letter-spacing:-0.2px;white-space:nowrap;">of 1</div><svg style="position:absolute;left:904px;top:463.5px;" width="14" height="14" viewBox="0 0 14 14"><circle cx="7" cy="7" r="4.8" fill="none" stroke="#444" stroke-width="0.9"/><path d="M4.6 7 H9.4" stroke="#444" stroke-width="0.9"/></svg><svg style="position:absolute;left:926px;top:463.5px;" width="14" height="14" viewBox="0 0 14 14"><circle cx="7" cy="7" r="4.8" fill="none" stroke="#444" stroke-width="0.9"/><path d="M4.6 7 H9.4 M7 4.6 V9.4" stroke="#444" stroke-width="0.9"/></svg><div style="position:absolute;left:944.9px;top:460.8px;width:48.8px;height:19.7px;background:#fff;border:1px solid #e0e1e4;border-radius:4px;"></div><div style="position:absolute;left:955px;top:465.93px;font-size:8px;line-height:9.60px;color:#333;font-weight:400;letter-spacing:-0.2px;white-space:nowrap;">83%</div><svg style="position:absolute;left:980px;top:467px;" width="10" height="7" viewBox="0 0 10 7"><path d="M1 1 L5 5 L9 1" fill="none" stroke="#333" stroke-width="1"/></svg><svg style="position:absolute;left:999px;top:464px;" width="12" height="12" viewBox="0 0 12 12"><path d="M2 1.5 L10 6 L6 6.8 L4 10.5 Z" fill="none" stroke="#3b82f6" stroke-width="0.9" stroke-linejoin="round"/></svg><svg style="position:absolute;left:1020px;top:463px;" width="13" height="13" viewBox="0 0 13 13"><path d="M3.5 7 V3.5 Q3.5 2.5 4.3 2.5 Q5.1 2.5 5.1 3.5 V6 V2.2 Q5.1 1.2 5.9 1.2 Q6.7 1.2 6.7 2.2 V6 V2.6 Q6.7 1.7 7.5 1.7 Q8.3 1.7 8.3 2.6 V6.2 V4 Q8.3 3.2 9.1 3.2 Q9.9 3.2 9.9 4 V8.3 Q9.9 11.5 7 11.5 Q5 11.5 4 9.8 L2 7.2 Q1.6 6.3 2.5 6.2 Q3 6.2 3.5 7 Z" fill="none" stroke="#333" stroke-width="0.9" stroke-linejoin="round"/></svg><svg style="position:absolute;left:1248px;top:464px;" width="12" height="12" viewBox="0 0 12 12"><circle cx="4.8" cy="4.8" r="3.6" fill="none" stroke="#333" stroke-width="1"/><path d="M7.4 7.4 L10.8 10.8" stroke="#333" stroke-width="1.1"/></svg><div style="position:absolute;left:796.7px;top:482.8px;width:468.3px;height:160px;background:#f3f4f8;"></div><div style="position:absolute;left:796.2px;top:482.8px;width:1px;height:160px;background:rgba(0,0,0,0.105);"></div><svg style="position:absolute;left:776.5px;top:490px;" width="11" height="12" viewBox="0 0 11 12"><path d="M3.5 3 H8 L10 5 V11 H3.5 Z" fill="none" stroke="#444" stroke-width="0.9"/><path d="M3.5 9 H1.2 V1 H6 L7.2 2.2" fill="none" stroke="#444" stroke-width="0.9"/></svg><div style="position:absolute;left:774px;top:517px;width:18px;height:19px;background:#f1f2f5;border-radius:4px;"></div><svg style="position:absolute;left:779px;top:521px;" width="8" height="11" viewBox="0 0 8 11"><path d="M1 1 H7 V10 L4 7.6 L1 10 Z" fill="none" stroke="#c5c8cd" stroke-width="0.9"/></svg><div style="position:absolute;left:799.4px;top:486.3px;width:412.4px;height:160px;background:#fff;border:1px solid #cfd0d3;"></div><div style="position:absolute;left:828.9px;top:495.3px;width:43px;height:43px;background:#d93a2b;"></div><svg style="position:absolute;left:828.9px;top:495.3px;" width="43" height="43" viewBox="0 0 43 43"><path d="M17 15.4 Q15.3 12.6 11.2 12.6 Q4.3 12.6 4.3 20.2 Q4.3 27.8 11.2 27.8 Q15.3 27.8 17 25" fill="none" stroke="#fff" stroke-width="2.3"/><path d="M29.3 12.2 V27.1 H39.2" fill="none" stroke="#fff" stroke-width="2.3"/><rect x="3.4" y="31.2" width="36.3" height="1.6" fill="#fff"/></svg><div style="position:absolute;left:701.6px;width:300px;text-align:center;top:514.13px;font-size:10px;line-height:12.00px;color:#8d7a74;font-weight:400;letter-spacing:0px;white-space:nowrap;">&amp;</div><div style="position:absolute;left:700.5px;width:300px;text-align:center;top:532.58px;font-size:3.4px;line-height:4.08px;color:#f2c4bd;font-weight:400;letter-spacing:0.4px;white-space:nowrap;">C I V I L S</div><div style="position:absolute;left:829px;top:539.45px;font-size:4.6px;line-height:5.52px;color:#111;font-weight:700;letter-spacing:-0.12px;white-space:nowrap;">Credit Management Office</div><div style="position:absolute;left:829px;top:544.45px;font-size:4.6px;line-height:5.52px;color:#222;font-weight:400;letter-spacing:-0.05px;white-space:nowrap;">302 Drumoyne Rd, Glasgow G51 4DX</div><div style="position:absolute;left:829px;top:549.45px;font-size:4.6px;line-height:5.52px;color:#222;font-weight:400;letter-spacing:-0.05px;white-space:nowrap;">T: 0141 892 8960</div><div style="position:absolute;left:829px;top:554.45px;font-size:4.6px;line-height:5.52px;color:#222;font-weight:400;letter-spacing:-0.05px;white-space:nowrap;">E: civils.creditcontrol@civilsandlintels.co.uk</div><div style="position:absolute;left:842px;top:576.15px;font-size:4.6px;line-height:5.52px;color:#111;font-weight:700;letter-spacing:-0.1px;white-space:nowrap;">Invoice to:</div><div style="position:absolute;left:1026.8px;top:576.15px;font-size:4.6px;line-height:5.52px;color:#111;font-weight:700;letter-spacing:-0.1px;white-space:nowrap;">Deliver to:</div><div style="position:absolute;left:1114.7px;top:500.22px;font-size:13.5px;line-height:16.20px;color:#111;font-weight:700;letter-spacing:-0.25px;white-space:nowrap;">INVOICE</div><div style="position:absolute;left:868.5px;width:300px;text-align:right;top:515.95px;font-size:4.6px;line-height:5.52px;color:#111;font-weight:700;letter-spacing:-0.15px;white-space:nowrap;">Page 1 of 1</div><div style="position:absolute;left:842px;top:618.9px;font-size:5.6px;line-height:6.72px;color:#222;font-weight:400;letter-spacing:-0.12px;white-space:nowrap;">BERKELEY HOMES (NORTH EAST</div><div style="position:absolute;left:842px;top:625.2px;font-size:5.6px;line-height:6.72px;color:#222;font-weight:400;letter-spacing:-0.12px;white-space:nowrap;">LONDON) LTD</div><div style="position:absolute;left:842px;top:631.5px;font-size:5.6px;line-height:6.72px;color:#222;font-weight:400;letter-spacing:-0.12px;white-space:nowrap;">61 LEMAN STREET</div><div style="position:absolute;left:1027px;top:611.48px;font-size:5.3px;line-height:6.36px;color:#222;font-weight:400;letter-spacing:-0.1px;white-space:nowrap;">Berkeley Homes</div><div style="position:absolute;left:1027px;top:617.78px;font-size:5.3px;line-height:6.36px;color:#222;font-weight:400;letter-spacing:-0.1px;white-space:nowrap;">St Albans Road</div><div style="position:absolute;left:1027px;top:624.18px;font-size:5.3px;line-height:6.36px;color:#222;font-weight:400;letter-spacing:-0.1px;white-space:nowrap;">Watford</div><div style="position:absolute;left:1027px;top:630.58px;font-size:5.3px;line-height:6.36px;color:#222;font-weight:400;letter-spacing:-0.1px;white-space:nowrap;">May07815 010375</div><div style="position:absolute;left:0px;top:636px;width:1280px;height:3px;background:#131633;"></div><div style="position:absolute;left:1277px;top:3px;width:3px;height:635px;background:#131633;"></div></body></html>
